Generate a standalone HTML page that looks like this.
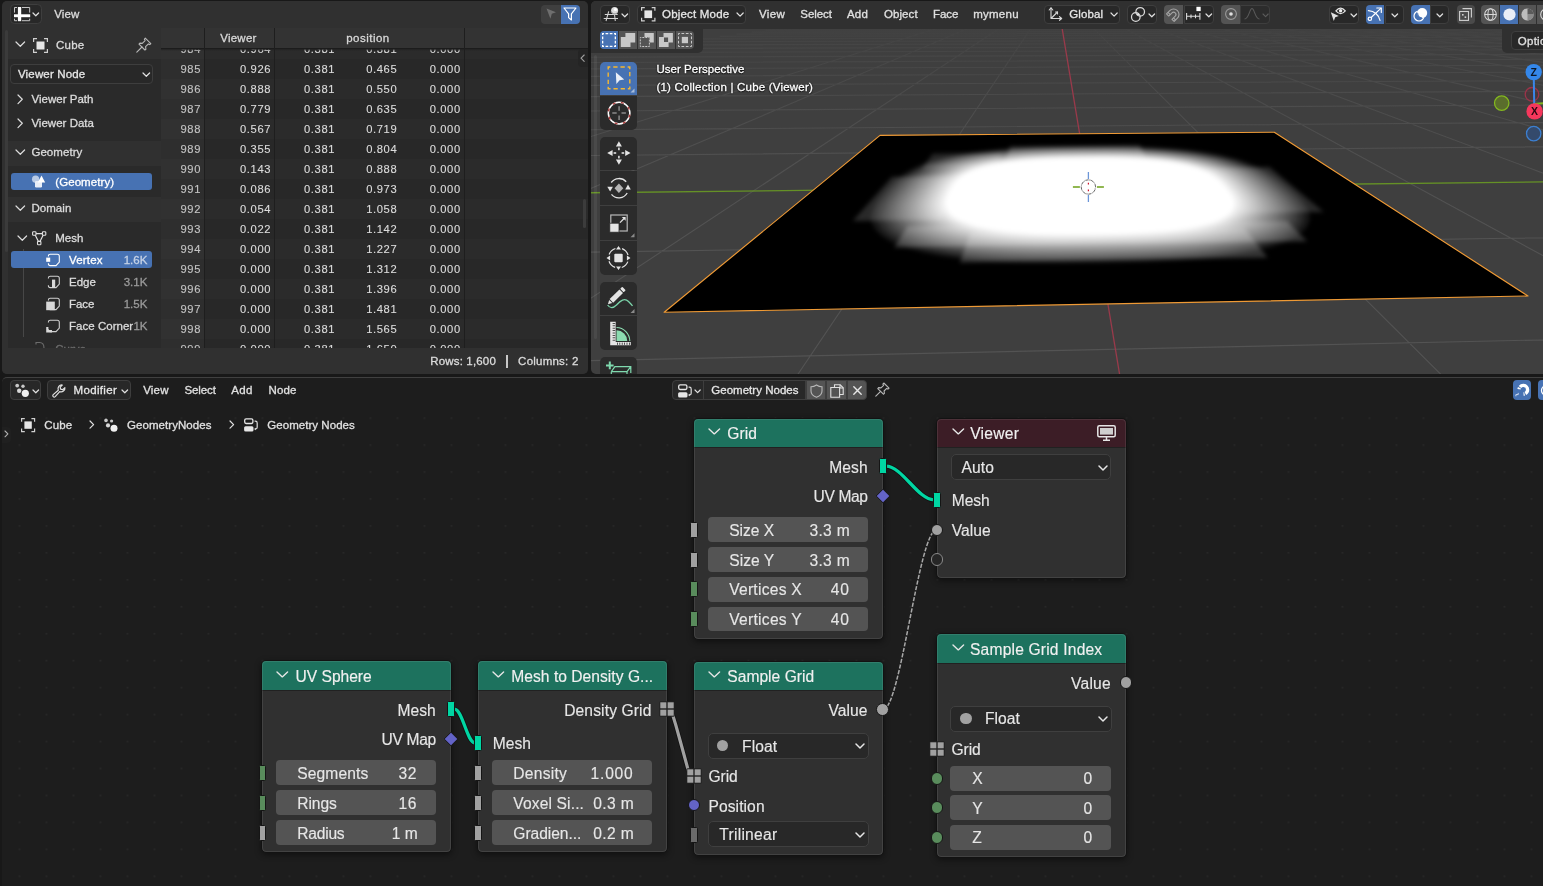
<!DOCTYPE html>
<html><head><meta charset="utf-8"><title>Blender</title>
<style>
html,body{margin:0;padding:0}
body{width:1543px;height:886px;overflow:hidden;position:relative;background:#181818;font-family:"Liberation Sans",sans-serif;font-size:11.5px;color:#e0e0e0}
div{box-sizing:content-box}
</style></head><body>
<div id="root" style="position:absolute;left:0;top:0;width:1543px;height:886px;will-change:transform">
<div style="position:absolute;left:2px;top:1px;width:586px;height:373px;background:#282828;border-radius:5px;overflow:hidden">
<div style="position:absolute;left:-2px;top:-1px;width:600px;height:400px">
<div style="position:absolute;left:2px;top:1px;width:586px;height:27px;background:#303030;border-radius:0px;"></div>
<div style="position:absolute;left:161px;top:48px;width:427px;height:300px;background:#282828;border-radius:0px;"></div>
<div style="position:absolute;left:161px;top:48px;width:427px;height:300px;overflow:hidden">
<div style="position:absolute;left:-161px;top:-48px;width:600px;height:400px">
<div style="position:absolute;left:161px;top:39px;width:427px;height:20px;background:#2b2b2b;border-radius:0px;"></div>
<div style="position:absolute;left:161px;top:79px;width:427px;height:20px;background:#2b2b2b;border-radius:0px;"></div>
<div style="position:absolute;left:161px;top:119px;width:427px;height:20px;background:#2b2b2b;border-radius:0px;"></div>
<div style="position:absolute;left:161px;top:159px;width:427px;height:20px;background:#2b2b2b;border-radius:0px;"></div>
<div style="position:absolute;left:161px;top:199px;width:427px;height:20px;background:#2b2b2b;border-radius:0px;"></div>
<div style="position:absolute;left:161px;top:239px;width:427px;height:20px;background:#2b2b2b;border-radius:0px;"></div>
<div style="position:absolute;left:161px;top:279px;width:427px;height:20px;background:#2b2b2b;border-radius:0px;"></div>
<div style="position:absolute;left:161px;top:319px;width:427px;height:20px;background:#2b2b2b;border-radius:0px;"></div>
<div style="position:absolute;left:161px;top:48px;width:43px;height:300px;background:rgba(255,255,255,0.03);border-radius:0px;"></div>
<div style="position:absolute;left:180.47px;top:40.70px;font-size:11.20px;line-height:16px;letter-spacing:0.670px;color:#c4c4c4;white-space:nowrap;-webkit-text-stroke:0.3px;-webkit-text-stroke:0.12px;">984</div>
<div style="position:absolute;left:240.01px;top:40.70px;font-size:11.20px;line-height:16px;letter-spacing:0.614px;color:#dcdcdc;white-space:nowrap;-webkit-text-stroke:0.3px;-webkit-text-stroke:0.12px;">0.964</div>
<div style="position:absolute;left:304.01px;top:40.70px;font-size:11.20px;line-height:16px;letter-spacing:0.614px;color:#dcdcdc;white-space:nowrap;-webkit-text-stroke:0.3px;-webkit-text-stroke:0.12px;">0.381</div>
<div style="position:absolute;left:366.21px;top:40.70px;font-size:11.20px;line-height:16px;letter-spacing:0.614px;color:#dcdcdc;white-space:nowrap;-webkit-text-stroke:0.3px;-webkit-text-stroke:0.12px;">0.381</div>
<div style="position:absolute;left:429.71px;top:40.70px;font-size:11.20px;line-height:16px;letter-spacing:0.614px;color:#dcdcdc;white-space:nowrap;-webkit-text-stroke:0.3px;-webkit-text-stroke:0.12px;">0.000</div>
<div style="position:absolute;left:180.47px;top:60.70px;font-size:11.20px;line-height:16px;letter-spacing:0.670px;color:#c4c4c4;white-space:nowrap;-webkit-text-stroke:0.3px;-webkit-text-stroke:0.12px;">985</div>
<div style="position:absolute;left:240.01px;top:60.70px;font-size:11.20px;line-height:16px;letter-spacing:0.614px;color:#dcdcdc;white-space:nowrap;-webkit-text-stroke:0.3px;-webkit-text-stroke:0.12px;">0.926</div>
<div style="position:absolute;left:304.01px;top:60.70px;font-size:11.20px;line-height:16px;letter-spacing:0.614px;color:#dcdcdc;white-space:nowrap;-webkit-text-stroke:0.3px;-webkit-text-stroke:0.12px;">0.381</div>
<div style="position:absolute;left:366.21px;top:60.70px;font-size:11.20px;line-height:16px;letter-spacing:0.614px;color:#dcdcdc;white-space:nowrap;-webkit-text-stroke:0.3px;-webkit-text-stroke:0.12px;">0.465</div>
<div style="position:absolute;left:429.71px;top:60.70px;font-size:11.20px;line-height:16px;letter-spacing:0.614px;color:#dcdcdc;white-space:nowrap;-webkit-text-stroke:0.3px;-webkit-text-stroke:0.12px;">0.000</div>
<div style="position:absolute;left:180.47px;top:80.70px;font-size:11.20px;line-height:16px;letter-spacing:0.670px;color:#c4c4c4;white-space:nowrap;-webkit-text-stroke:0.3px;-webkit-text-stroke:0.12px;">986</div>
<div style="position:absolute;left:240.01px;top:80.70px;font-size:11.20px;line-height:16px;letter-spacing:0.614px;color:#dcdcdc;white-space:nowrap;-webkit-text-stroke:0.3px;-webkit-text-stroke:0.12px;">0.888</div>
<div style="position:absolute;left:304.01px;top:80.70px;font-size:11.20px;line-height:16px;letter-spacing:0.614px;color:#dcdcdc;white-space:nowrap;-webkit-text-stroke:0.3px;-webkit-text-stroke:0.12px;">0.381</div>
<div style="position:absolute;left:366.21px;top:80.70px;font-size:11.20px;line-height:16px;letter-spacing:0.614px;color:#dcdcdc;white-space:nowrap;-webkit-text-stroke:0.3px;-webkit-text-stroke:0.12px;">0.550</div>
<div style="position:absolute;left:429.71px;top:80.70px;font-size:11.20px;line-height:16px;letter-spacing:0.614px;color:#dcdcdc;white-space:nowrap;-webkit-text-stroke:0.3px;-webkit-text-stroke:0.12px;">0.000</div>
<div style="position:absolute;left:180.47px;top:100.70px;font-size:11.20px;line-height:16px;letter-spacing:0.670px;color:#c4c4c4;white-space:nowrap;-webkit-text-stroke:0.3px;-webkit-text-stroke:0.12px;">987</div>
<div style="position:absolute;left:240.01px;top:100.70px;font-size:11.20px;line-height:16px;letter-spacing:0.614px;color:#dcdcdc;white-space:nowrap;-webkit-text-stroke:0.3px;-webkit-text-stroke:0.12px;">0.779</div>
<div style="position:absolute;left:304.01px;top:100.70px;font-size:11.20px;line-height:16px;letter-spacing:0.614px;color:#dcdcdc;white-space:nowrap;-webkit-text-stroke:0.3px;-webkit-text-stroke:0.12px;">0.381</div>
<div style="position:absolute;left:366.21px;top:100.70px;font-size:11.20px;line-height:16px;letter-spacing:0.614px;color:#dcdcdc;white-space:nowrap;-webkit-text-stroke:0.3px;-webkit-text-stroke:0.12px;">0.635</div>
<div style="position:absolute;left:429.71px;top:100.70px;font-size:11.20px;line-height:16px;letter-spacing:0.614px;color:#dcdcdc;white-space:nowrap;-webkit-text-stroke:0.3px;-webkit-text-stroke:0.12px;">0.000</div>
<div style="position:absolute;left:180.47px;top:120.70px;font-size:11.20px;line-height:16px;letter-spacing:0.670px;color:#c4c4c4;white-space:nowrap;-webkit-text-stroke:0.3px;-webkit-text-stroke:0.12px;">988</div>
<div style="position:absolute;left:240.01px;top:120.70px;font-size:11.20px;line-height:16px;letter-spacing:0.614px;color:#dcdcdc;white-space:nowrap;-webkit-text-stroke:0.3px;-webkit-text-stroke:0.12px;">0.567</div>
<div style="position:absolute;left:304.01px;top:120.70px;font-size:11.20px;line-height:16px;letter-spacing:0.614px;color:#dcdcdc;white-space:nowrap;-webkit-text-stroke:0.3px;-webkit-text-stroke:0.12px;">0.381</div>
<div style="position:absolute;left:366.21px;top:120.70px;font-size:11.20px;line-height:16px;letter-spacing:0.614px;color:#dcdcdc;white-space:nowrap;-webkit-text-stroke:0.3px;-webkit-text-stroke:0.12px;">0.719</div>
<div style="position:absolute;left:429.71px;top:120.70px;font-size:11.20px;line-height:16px;letter-spacing:0.614px;color:#dcdcdc;white-space:nowrap;-webkit-text-stroke:0.3px;-webkit-text-stroke:0.12px;">0.000</div>
<div style="position:absolute;left:180.47px;top:140.70px;font-size:11.20px;line-height:16px;letter-spacing:0.670px;color:#c4c4c4;white-space:nowrap;-webkit-text-stroke:0.3px;-webkit-text-stroke:0.12px;">989</div>
<div style="position:absolute;left:240.01px;top:140.70px;font-size:11.20px;line-height:16px;letter-spacing:0.614px;color:#dcdcdc;white-space:nowrap;-webkit-text-stroke:0.3px;-webkit-text-stroke:0.12px;">0.355</div>
<div style="position:absolute;left:304.01px;top:140.70px;font-size:11.20px;line-height:16px;letter-spacing:0.614px;color:#dcdcdc;white-space:nowrap;-webkit-text-stroke:0.3px;-webkit-text-stroke:0.12px;">0.381</div>
<div style="position:absolute;left:366.21px;top:140.70px;font-size:11.20px;line-height:16px;letter-spacing:0.614px;color:#dcdcdc;white-space:nowrap;-webkit-text-stroke:0.3px;-webkit-text-stroke:0.12px;">0.804</div>
<div style="position:absolute;left:429.71px;top:140.70px;font-size:11.20px;line-height:16px;letter-spacing:0.614px;color:#dcdcdc;white-space:nowrap;-webkit-text-stroke:0.3px;-webkit-text-stroke:0.12px;">0.000</div>
<div style="position:absolute;left:180.47px;top:160.70px;font-size:11.20px;line-height:16px;letter-spacing:0.670px;color:#c4c4c4;white-space:nowrap;-webkit-text-stroke:0.3px;-webkit-text-stroke:0.12px;">990</div>
<div style="position:absolute;left:240.01px;top:160.70px;font-size:11.20px;line-height:16px;letter-spacing:0.614px;color:#dcdcdc;white-space:nowrap;-webkit-text-stroke:0.3px;-webkit-text-stroke:0.12px;">0.143</div>
<div style="position:absolute;left:304.01px;top:160.70px;font-size:11.20px;line-height:16px;letter-spacing:0.614px;color:#dcdcdc;white-space:nowrap;-webkit-text-stroke:0.3px;-webkit-text-stroke:0.12px;">0.381</div>
<div style="position:absolute;left:366.21px;top:160.70px;font-size:11.20px;line-height:16px;letter-spacing:0.614px;color:#dcdcdc;white-space:nowrap;-webkit-text-stroke:0.3px;-webkit-text-stroke:0.12px;">0.888</div>
<div style="position:absolute;left:429.71px;top:160.70px;font-size:11.20px;line-height:16px;letter-spacing:0.614px;color:#dcdcdc;white-space:nowrap;-webkit-text-stroke:0.3px;-webkit-text-stroke:0.12px;">0.000</div>
<div style="position:absolute;left:180.47px;top:180.70px;font-size:11.20px;line-height:16px;letter-spacing:0.670px;color:#c4c4c4;white-space:nowrap;-webkit-text-stroke:0.3px;-webkit-text-stroke:0.12px;">991</div>
<div style="position:absolute;left:240.01px;top:180.70px;font-size:11.20px;line-height:16px;letter-spacing:0.614px;color:#dcdcdc;white-space:nowrap;-webkit-text-stroke:0.3px;-webkit-text-stroke:0.12px;">0.086</div>
<div style="position:absolute;left:304.01px;top:180.70px;font-size:11.20px;line-height:16px;letter-spacing:0.614px;color:#dcdcdc;white-space:nowrap;-webkit-text-stroke:0.3px;-webkit-text-stroke:0.12px;">0.381</div>
<div style="position:absolute;left:366.21px;top:180.70px;font-size:11.20px;line-height:16px;letter-spacing:0.614px;color:#dcdcdc;white-space:nowrap;-webkit-text-stroke:0.3px;-webkit-text-stroke:0.12px;">0.973</div>
<div style="position:absolute;left:429.71px;top:180.70px;font-size:11.20px;line-height:16px;letter-spacing:0.614px;color:#dcdcdc;white-space:nowrap;-webkit-text-stroke:0.3px;-webkit-text-stroke:0.12px;">0.000</div>
<div style="position:absolute;left:180.47px;top:200.70px;font-size:11.20px;line-height:16px;letter-spacing:0.670px;color:#c4c4c4;white-space:nowrap;-webkit-text-stroke:0.3px;-webkit-text-stroke:0.12px;">992</div>
<div style="position:absolute;left:240.01px;top:200.70px;font-size:11.20px;line-height:16px;letter-spacing:0.614px;color:#dcdcdc;white-space:nowrap;-webkit-text-stroke:0.3px;-webkit-text-stroke:0.12px;">0.054</div>
<div style="position:absolute;left:304.01px;top:200.70px;font-size:11.20px;line-height:16px;letter-spacing:0.614px;color:#dcdcdc;white-space:nowrap;-webkit-text-stroke:0.3px;-webkit-text-stroke:0.12px;">0.381</div>
<div style="position:absolute;left:366.21px;top:200.70px;font-size:11.20px;line-height:16px;letter-spacing:0.614px;color:#dcdcdc;white-space:nowrap;-webkit-text-stroke:0.3px;-webkit-text-stroke:0.12px;">1.058</div>
<div style="position:absolute;left:429.71px;top:200.70px;font-size:11.20px;line-height:16px;letter-spacing:0.614px;color:#dcdcdc;white-space:nowrap;-webkit-text-stroke:0.3px;-webkit-text-stroke:0.12px;">0.000</div>
<div style="position:absolute;left:180.47px;top:220.70px;font-size:11.20px;line-height:16px;letter-spacing:0.670px;color:#c4c4c4;white-space:nowrap;-webkit-text-stroke:0.3px;-webkit-text-stroke:0.12px;">993</div>
<div style="position:absolute;left:240.01px;top:220.70px;font-size:11.20px;line-height:16px;letter-spacing:0.614px;color:#dcdcdc;white-space:nowrap;-webkit-text-stroke:0.3px;-webkit-text-stroke:0.12px;">0.022</div>
<div style="position:absolute;left:304.01px;top:220.70px;font-size:11.20px;line-height:16px;letter-spacing:0.614px;color:#dcdcdc;white-space:nowrap;-webkit-text-stroke:0.3px;-webkit-text-stroke:0.12px;">0.381</div>
<div style="position:absolute;left:366.21px;top:220.70px;font-size:11.20px;line-height:16px;letter-spacing:0.614px;color:#dcdcdc;white-space:nowrap;-webkit-text-stroke:0.3px;-webkit-text-stroke:0.12px;">1.142</div>
<div style="position:absolute;left:429.71px;top:220.70px;font-size:11.20px;line-height:16px;letter-spacing:0.614px;color:#dcdcdc;white-space:nowrap;-webkit-text-stroke:0.3px;-webkit-text-stroke:0.12px;">0.000</div>
<div style="position:absolute;left:180.47px;top:240.70px;font-size:11.20px;line-height:16px;letter-spacing:0.670px;color:#c4c4c4;white-space:nowrap;-webkit-text-stroke:0.3px;-webkit-text-stroke:0.12px;">994</div>
<div style="position:absolute;left:240.01px;top:240.70px;font-size:11.20px;line-height:16px;letter-spacing:0.614px;color:#dcdcdc;white-space:nowrap;-webkit-text-stroke:0.3px;-webkit-text-stroke:0.12px;">0.000</div>
<div style="position:absolute;left:304.01px;top:240.70px;font-size:11.20px;line-height:16px;letter-spacing:0.614px;color:#dcdcdc;white-space:nowrap;-webkit-text-stroke:0.3px;-webkit-text-stroke:0.12px;">0.381</div>
<div style="position:absolute;left:366.21px;top:240.70px;font-size:11.20px;line-height:16px;letter-spacing:0.614px;color:#dcdcdc;white-space:nowrap;-webkit-text-stroke:0.3px;-webkit-text-stroke:0.12px;">1.227</div>
<div style="position:absolute;left:429.71px;top:240.70px;font-size:11.20px;line-height:16px;letter-spacing:0.614px;color:#dcdcdc;white-space:nowrap;-webkit-text-stroke:0.3px;-webkit-text-stroke:0.12px;">0.000</div>
<div style="position:absolute;left:180.47px;top:260.70px;font-size:11.20px;line-height:16px;letter-spacing:0.670px;color:#c4c4c4;white-space:nowrap;-webkit-text-stroke:0.3px;-webkit-text-stroke:0.12px;">995</div>
<div style="position:absolute;left:240.01px;top:260.70px;font-size:11.20px;line-height:16px;letter-spacing:0.614px;color:#dcdcdc;white-space:nowrap;-webkit-text-stroke:0.3px;-webkit-text-stroke:0.12px;">0.000</div>
<div style="position:absolute;left:304.01px;top:260.70px;font-size:11.20px;line-height:16px;letter-spacing:0.614px;color:#dcdcdc;white-space:nowrap;-webkit-text-stroke:0.3px;-webkit-text-stroke:0.12px;">0.381</div>
<div style="position:absolute;left:366.21px;top:260.70px;font-size:11.20px;line-height:16px;letter-spacing:0.614px;color:#dcdcdc;white-space:nowrap;-webkit-text-stroke:0.3px;-webkit-text-stroke:0.12px;">1.312</div>
<div style="position:absolute;left:429.71px;top:260.70px;font-size:11.20px;line-height:16px;letter-spacing:0.614px;color:#dcdcdc;white-space:nowrap;-webkit-text-stroke:0.3px;-webkit-text-stroke:0.12px;">0.000</div>
<div style="position:absolute;left:180.47px;top:280.70px;font-size:11.20px;line-height:16px;letter-spacing:0.670px;color:#c4c4c4;white-space:nowrap;-webkit-text-stroke:0.3px;-webkit-text-stroke:0.12px;">996</div>
<div style="position:absolute;left:240.01px;top:280.70px;font-size:11.20px;line-height:16px;letter-spacing:0.614px;color:#dcdcdc;white-space:nowrap;-webkit-text-stroke:0.3px;-webkit-text-stroke:0.12px;">0.000</div>
<div style="position:absolute;left:304.01px;top:280.70px;font-size:11.20px;line-height:16px;letter-spacing:0.614px;color:#dcdcdc;white-space:nowrap;-webkit-text-stroke:0.3px;-webkit-text-stroke:0.12px;">0.381</div>
<div style="position:absolute;left:366.21px;top:280.70px;font-size:11.20px;line-height:16px;letter-spacing:0.614px;color:#dcdcdc;white-space:nowrap;-webkit-text-stroke:0.3px;-webkit-text-stroke:0.12px;">1.396</div>
<div style="position:absolute;left:429.71px;top:280.70px;font-size:11.20px;line-height:16px;letter-spacing:0.614px;color:#dcdcdc;white-space:nowrap;-webkit-text-stroke:0.3px;-webkit-text-stroke:0.12px;">0.000</div>
<div style="position:absolute;left:180.47px;top:300.70px;font-size:11.20px;line-height:16px;letter-spacing:0.670px;color:#c4c4c4;white-space:nowrap;-webkit-text-stroke:0.3px;-webkit-text-stroke:0.12px;">997</div>
<div style="position:absolute;left:240.01px;top:300.70px;font-size:11.20px;line-height:16px;letter-spacing:0.614px;color:#dcdcdc;white-space:nowrap;-webkit-text-stroke:0.3px;-webkit-text-stroke:0.12px;">0.000</div>
<div style="position:absolute;left:304.01px;top:300.70px;font-size:11.20px;line-height:16px;letter-spacing:0.614px;color:#dcdcdc;white-space:nowrap;-webkit-text-stroke:0.3px;-webkit-text-stroke:0.12px;">0.381</div>
<div style="position:absolute;left:366.21px;top:300.70px;font-size:11.20px;line-height:16px;letter-spacing:0.614px;color:#dcdcdc;white-space:nowrap;-webkit-text-stroke:0.3px;-webkit-text-stroke:0.12px;">1.481</div>
<div style="position:absolute;left:429.71px;top:300.70px;font-size:11.20px;line-height:16px;letter-spacing:0.614px;color:#dcdcdc;white-space:nowrap;-webkit-text-stroke:0.3px;-webkit-text-stroke:0.12px;">0.000</div>
<div style="position:absolute;left:180.47px;top:320.70px;font-size:11.20px;line-height:16px;letter-spacing:0.670px;color:#c4c4c4;white-space:nowrap;-webkit-text-stroke:0.3px;-webkit-text-stroke:0.12px;">998</div>
<div style="position:absolute;left:240.01px;top:320.70px;font-size:11.20px;line-height:16px;letter-spacing:0.614px;color:#dcdcdc;white-space:nowrap;-webkit-text-stroke:0.3px;-webkit-text-stroke:0.12px;">0.000</div>
<div style="position:absolute;left:304.01px;top:320.70px;font-size:11.20px;line-height:16px;letter-spacing:0.614px;color:#dcdcdc;white-space:nowrap;-webkit-text-stroke:0.3px;-webkit-text-stroke:0.12px;">0.381</div>
<div style="position:absolute;left:366.21px;top:320.70px;font-size:11.20px;line-height:16px;letter-spacing:0.614px;color:#dcdcdc;white-space:nowrap;-webkit-text-stroke:0.3px;-webkit-text-stroke:0.12px;">1.565</div>
<div style="position:absolute;left:429.71px;top:320.70px;font-size:11.20px;line-height:16px;letter-spacing:0.614px;color:#dcdcdc;white-space:nowrap;-webkit-text-stroke:0.3px;-webkit-text-stroke:0.12px;">0.000</div>
<div style="position:absolute;left:180.47px;top:340.70px;font-size:11.20px;line-height:16px;letter-spacing:0.670px;color:#c4c4c4;white-space:nowrap;-webkit-text-stroke:0.3px;-webkit-text-stroke:0.12px;">999</div>
<div style="position:absolute;left:240.01px;top:340.70px;font-size:11.20px;line-height:16px;letter-spacing:0.614px;color:#dcdcdc;white-space:nowrap;-webkit-text-stroke:0.3px;-webkit-text-stroke:0.12px;">0.000</div>
<div style="position:absolute;left:304.01px;top:340.70px;font-size:11.20px;line-height:16px;letter-spacing:0.614px;color:#dcdcdc;white-space:nowrap;-webkit-text-stroke:0.3px;-webkit-text-stroke:0.12px;">0.381</div>
<div style="position:absolute;left:366.21px;top:340.70px;font-size:11.20px;line-height:16px;letter-spacing:0.614px;color:#dcdcdc;white-space:nowrap;-webkit-text-stroke:0.3px;-webkit-text-stroke:0.12px;">1.650</div>
<div style="position:absolute;left:429.71px;top:340.70px;font-size:11.20px;line-height:16px;letter-spacing:0.614px;color:#dcdcdc;white-space:nowrap;-webkit-text-stroke:0.3px;-webkit-text-stroke:0.12px;">0.000</div>
</div></div>
<div style="position:absolute;left:161px;top:28px;width:427px;height:20px;background:#333333;border-radius:0px;"></div>
<div style="position:absolute;left:161px;top:48px;width:427px;height:1px;background:#1c1c1c;border-radius:0px;"></div>
<div style="position:absolute;left:161px;top:49px;width:427px;height:2px;background:linear-gradient(#222,rgba(40,40,40,0));border-radius:0px;"></div>
<div style="position:absolute;left:220.18px;top:30.00px;font-size:11.50px;line-height:16px;letter-spacing:0.260px;color:#d8d8d8;white-space:nowrap;-webkit-text-stroke:0.3px;">Viewer</div>
<div style="position:absolute;left:346.19px;top:30.00px;font-size:11.50px;line-height:16px;letter-spacing:0.483px;color:#d8d8d8;white-space:nowrap;-webkit-text-stroke:0.3px;">position</div>
<div style="position:absolute;left:204px;top:28px;width:1px;height:320px;background:#1e1e1e;border-radius:0px;"></div>
<div style="position:absolute;left:274px;top:28px;width:1px;height:320px;background:#1e1e1e;border-radius:0px;"></div>
<div style="position:absolute;left:464px;top:28px;width:1px;height:320px;background:#1e1e1e;border-radius:0px;"></div>
<div style="position:absolute;left:583px;top:199px;width:3px;height:29px;background:#3c3c3c;border-radius:1.5px;"></div>
<div style="position:absolute;left:578px;top:49px;width:10px;height:18px;background:#242424;border-radius:4px 0 0 4px;"></div>
<svg style="position:absolute;left:581.4px;top:54.8px;overflow:visible;" width="3.2" height="6.4" viewBox="0 0 3.2 6.4"><polyline points="3.2,0 0,3.2 3.2,6.4" fill="none" stroke="#a0a0a0" stroke-width="1.1" stroke-linecap="round" stroke-linejoin="round"/></svg>
<div style="position:absolute;left:2px;top:348px;width:586px;height:26px;background:#303030;border-radius:0px;"></div>
<div style="position:absolute;left:430.20px;top:353.00px;font-size:11.50px;line-height:16px;letter-spacing:0.171px;color:#dcdcdc;white-space:nowrap;-webkit-text-stroke:0.3px;">Rows: 1,600</div>
<div style="position:absolute;left:506px;top:355px;width:1.5px;height:13px;background:#c8c8c8;border-radius:0px;"></div>
<div style="position:absolute;left:518.10px;top:353.00px;font-size:11.50px;line-height:16px;letter-spacing:0.234px;color:#dcdcdc;white-space:nowrap;-webkit-text-stroke:0.3px;">Columns: 2</div>
<div style="position:absolute;left:2px;top:28px;width:159px;height:320px;background:#303030;border-radius:0px;"></div>
<div style="position:absolute;left:5px;top:30px;width:3px;height:222px;background:#3b3b3b;border-radius:1.5px;"></div>
<div style="position:absolute;left:8px;top:59px;width:153px;height:82px;background:#2a2a2a;border-radius:0px;"></div>
<div style="position:absolute;left:8px;top:166px;width:153px;height:31px;background:#2a2a2a;border-radius:0px;"></div>
<div style="position:absolute;left:8px;top:222px;width:153px;height:126px;background:#2a2a2a;border-radius:0px;"></div>
<svg style="position:absolute;left:16.2px;top:42.35px;overflow:visible;" width="8.6" height="4.3" viewBox="0 0 8.6 4.3"><polyline points="0,0 4.3,4.3 8.6,0" fill="none" stroke="#dcdcdc" stroke-width="1.2" stroke-linecap="round" stroke-linejoin="round"/></svg>
<svg style="position:absolute;left:32.5px;top:37.5px;overflow:visible;" width="15" height="15" viewBox="0 0 15 15"><rect x="3.5" y="3.5" width="8" height="8" fill="#e6e6e6"/><path d="M0.6,4 V0.6 H4 M11,0.6 H14.4 V4 M14.4,11 V14.4 H11 M4,14.4 H0.6 V11" fill="none" stroke="#d0d0d0" stroke-width="1.2"/></svg>
<div style="position:absolute;left:56.10px;top:37.00px;font-size:11.50px;line-height:16px;letter-spacing:0.177px;color:#dcdcdc;white-space:nowrap;-webkit-text-stroke:0.3px;">Cube</div>
<svg style="position:absolute;left:135.5px;top:37px;overflow:visible;" width="16" height="16" viewBox="0 0 16 16"><g fill="none" stroke="#b8b8b8" stroke-width="1.1" stroke-linejoin="round" stroke-linecap="round"><path d="M9.3,1.2 L14.8,6.7 L13.6,7.6 L12.4,6.9 L9.6,9.7 L9.9,12.2 L8.9,13 L3,7.1 L3.9,6.1 L6.3,6.4 L9.1,3.6 L8.4,2.4 Z"/><path d="M6,10 L0.8,15.2"/></g></svg>
<div style="position:absolute;left:10px;top:64px;width:143px;height:20px;background:#282828;border-radius:4px;box-sizing:border-box;border:1px solid #3e3e3e"></div>
<div style="position:absolute;left:18.00px;top:66.30px;font-size:11.50px;line-height:16px;letter-spacing:0.161px;color:#e6e6e6;white-space:nowrap;-webkit-text-stroke:0.3px;">Viewer Node</div>
<svg style="position:absolute;left:142.7px;top:73.35px;overflow:visible;" width="6.6" height="3.3" viewBox="0 0 6.6 3.3"><polyline points="0,0 3.3,3.3 6.6,0" fill="none" stroke="#e0e0e0" stroke-width="1.2" stroke-linecap="round" stroke-linejoin="round"/></svg>
<svg style="position:absolute;left:18.15px;top:94.5px;overflow:visible;" width="4.3" height="8.6" viewBox="0 0 4.3 8.6"><polyline points="0,0 4.3,4.3 0,8.6" fill="none" stroke="#dcdcdc" stroke-width="1.2" stroke-linecap="round" stroke-linejoin="round"/></svg>
<div style="position:absolute;left:31.40px;top:91.00px;font-size:11.50px;line-height:16px;letter-spacing:0.028px;color:#dcdcdc;white-space:nowrap;-webkit-text-stroke:0.3px;">Viewer Path</div>
<svg style="position:absolute;left:18.15px;top:118.5px;overflow:visible;" width="4.3" height="8.6" viewBox="0 0 4.3 8.6"><polyline points="0,0 4.3,4.3 0,8.6" fill="none" stroke="#dcdcdc" stroke-width="1.2" stroke-linecap="round" stroke-linejoin="round"/></svg>
<div style="position:absolute;left:31.40px;top:115.00px;font-size:11.50px;line-height:16px;letter-spacing:0.016px;color:#dcdcdc;white-space:nowrap;-webkit-text-stroke:0.3px;">Viewer Data</div>
<svg style="position:absolute;left:16.2px;top:149.85px;overflow:visible;" width="8.6" height="4.3" viewBox="0 0 8.6 4.3"><polyline points="0,0 4.3,4.3 8.6,0" fill="none" stroke="#dcdcdc" stroke-width="1.2" stroke-linecap="round" stroke-linejoin="round"/></svg>
<div style="position:absolute;left:31.40px;top:144.00px;font-size:11.50px;line-height:16px;letter-spacing:0.064px;color:#dcdcdc;white-space:nowrap;-webkit-text-stroke:0.3px;">Geometry</div>
<div style="position:absolute;left:11px;top:173px;width:141px;height:17px;background:#4772b3;border-radius:3px;"></div>
<svg style="position:absolute;left:31.2px;top:174px;overflow:visible;" width="15" height="15" viewBox="0 0 15 15"><circle cx="4.6" cy="5.2" r="3.6" fill="#b9cbe6"/><rect x="4" y="7" width="7" height="6.5" rx="1.2" fill="#e8eef8"/><path d="M10.5,1.5 L14.2,8.6 H6.8 Z" fill="#ffffff"/></svg>
<div style="position:absolute;left:55.30px;top:173.60px;font-size:11.50px;line-height:16px;letter-spacing:0.065px;color:#ffffff;white-space:nowrap;-webkit-text-stroke:0.3px;">(Geometry)</div>
<svg style="position:absolute;left:16.2px;top:205.85px;overflow:visible;" width="8.6" height="4.3" viewBox="0 0 8.6 4.3"><polyline points="0,0 4.3,4.3 8.6,0" fill="none" stroke="#dcdcdc" stroke-width="1.2" stroke-linecap="round" stroke-linejoin="round"/></svg>
<div style="position:absolute;left:31.40px;top:200.00px;font-size:11.50px;line-height:16px;letter-spacing:0.062px;color:#dcdcdc;white-space:nowrap;-webkit-text-stroke:0.3px;">Domain</div>
<svg style="position:absolute;left:18.2px;top:235.85px;overflow:visible;" width="8.6" height="4.3" viewBox="0 0 8.6 4.3"><polyline points="0,0 4.3,4.3 8.6,0" fill="none" stroke="#dcdcdc" stroke-width="1.2" stroke-linecap="round" stroke-linejoin="round"/></svg>
<svg style="position:absolute;left:32px;top:231px;overflow:visible;" width="14.5" height="14.5" viewBox="0 0 14.5 14.5"><g fill="none" stroke="#e0e0e0" stroke-width="1.2"><path d="M2.4,2.6 H12 M2.4,2.6 L7.2,12 M12,2.6 L7.2,12"/></g><g fill="#2a2a2a" stroke="#e0e0e0" stroke-width="1.1"><rect x="0.6" y="0.8" width="3.4" height="3.4" rx="0.8"/><rect x="10.4" y="0.8" width="3.4" height="3.4" rx="0.8"/><rect x="5.5" y="10.4" width="3.4" height="3.4" rx="0.8"/></g></svg>
<div style="position:absolute;left:55.30px;top:230.00px;font-size:11.50px;line-height:16px;letter-spacing:-0.005px;color:#dcdcdc;white-space:nowrap;-webkit-text-stroke:0.3px;">Mesh</div>
<div style="position:absolute;left:23px;top:249px;width:1px;height:88px;background:#474747;border-radius:0px;"></div>
<div style="position:absolute;left:11px;top:251px;width:141px;height:17px;background:#4772b3;border-radius:3px;"></div>
<svg style="position:absolute;left:46px;top:253px;overflow:visible;" width="14" height="14" viewBox="0 0 14 14"><path d="M4.2,1.2 H11.3 Q13.3,1.2 13.3,3.2 V9 L10,12.6 H4.2 Q2.4,12.6 2.4,10.8 V10.2 M2.4,3.6 V3 Q2.4,1.2 4.2,1.2" fill="none" stroke="#ffffff" stroke-width="1.1"/><rect x="0.2" y="4.6" width="4" height="4.2" fill="#fff"/></svg>
<div style="position:absolute;left:69.00px;top:251.80px;font-size:11.50px;line-height:16px;letter-spacing:0.183px;color:#ffffff;white-space:nowrap;-webkit-text-stroke:0.3px;">Vertex</div>
<div style="position:absolute;left:123.70px;top:251.80px;font-size:11.50px;line-height:16px;letter-spacing:0.036px;color:#c5d2e6;white-space:nowrap;-webkit-text-stroke:0.3px;">1.6K</div>
<svg style="position:absolute;left:46px;top:275px;overflow:visible;" width="14" height="14" viewBox="0 0 14 14"><path d="M4.2,1.2 H11.3 Q13.3,1.2 13.3,3.2 V9 L10,12.6 H4.2 Q2.4,12.6 2.4,10.8 V10.2 M2.4,3.6 V3 Q2.4,1.2 4.2,1.2" fill="none" stroke="#d0d0d0" stroke-width="1.1"/><rect x="6" y="4.6" width="3.2" height="8.4" fill="#d8d8d8"/></svg>
<div style="position:absolute;left:69.00px;top:274.20px;font-size:11.50px;line-height:16px;letter-spacing:0.011px;color:#dcdcdc;white-space:nowrap;-webkit-text-stroke:0.3px;">Edge</div>
<div style="position:absolute;left:123.70px;top:274.20px;font-size:11.50px;line-height:16px;letter-spacing:0.036px;color:#9a9a9a;white-space:nowrap;-webkit-text-stroke:0.3px;">3.1K</div>
<svg style="position:absolute;left:46px;top:297px;overflow:visible;" width="14" height="14" viewBox="0 0 14 14"><path d="M4.2,1.2 H11.3 Q13.3,1.2 13.3,3.2 V9 L10,12.6 H4.2 Q2.4,12.6 2.4,10.8 V10.2 M2.4,3.6 V3 Q2.4,1.2 4.2,1.2" fill="none" stroke="#d0d0d0" stroke-width="1.1"/><rect x="0.2" y="4.6" width="8.6" height="8.6" fill="#d8d8d8"/></svg>
<div style="position:absolute;left:69.00px;top:296.20px;font-size:11.50px;line-height:16px;letter-spacing:-0.091px;color:#dcdcdc;white-space:nowrap;-webkit-text-stroke:0.3px;">Face</div>
<div style="position:absolute;left:123.70px;top:296.20px;font-size:11.50px;line-height:16px;letter-spacing:0.036px;color:#9a9a9a;white-space:nowrap;-webkit-text-stroke:0.3px;">1.5K</div>
<svg style="position:absolute;left:46px;top:319px;overflow:visible;" width="14" height="14" viewBox="0 0 14 14"><path d="M4.2,1.2 H11.3 Q13.3,1.2 13.3,3.2 V9 L10,12.6 H4.2 Q2.4,12.6 2.4,10.8 V10.2 M2.4,3.6 V3 Q2.4,1.2 4.2,1.2" fill="none" stroke="#d0d0d0" stroke-width="1.1"/><path d="M0.2,8 H2.4 V11 H6 V13.4 H0.2 Z" fill="#d8d8d8"/></svg>
<div style="position:absolute;left:69.00px;top:318.20px;font-size:11.50px;line-height:16px;letter-spacing:0.026px;color:#dcdcdc;white-space:nowrap;-webkit-text-stroke:0.3px;">Face Corner</div>
<div style="position:absolute;left:133.40px;top:318.20px;font-size:11.50px;line-height:16px;letter-spacing:-0.033px;color:#9a9a9a;white-space:nowrap;-webkit-text-stroke:0.3px;">1K</div>
<div style="position:absolute;left:55.30px;top:340.50px;font-size:11.50px;line-height:16px;letter-spacing:-0.015px;color:#6c6c6c;white-space:nowrap;-webkit-text-stroke:0.3px;">Curve</div>
<svg style="position:absolute;left:35px;top:341px;overflow:visible;" width="12" height="12" viewBox="0 0 12 12"><path d="M1,3.5 V1.5 H4.5 Q9,1.5 9,7 V10" fill="none" stroke="#6c6c6c" stroke-width="1.1"/></svg>
<div style="position:absolute;left:2px;top:348px;width:159px;height:26px;background:#303030;border-radius:0px;"></div>
<div style="position:absolute;left:10px;top:4px;width:31.5px;height:19.8px;background:#282828;border-radius:4.5px;box-sizing:border-box;border:1px solid #3e3e3e"></div>
<svg style="position:absolute;left:13.9px;top:6.8px;overflow:visible;" width="16.2" height="14.2" viewBox="0 0 16.2 14.2"><g fill="none" stroke="#c8c8c8" stroke-width="1"><path d="M0.5,5.600 V0.5 H3 M8,0.5 H15.700 V5.600 M15.700,11.700 V13.700 H8 M3,13.700 H0.5 V11.700"/></g><rect x="3.900" y="0" width="3.300" height="14.200" fill="#fff"/><rect x="0" y="7.300" width="16.200" height="2.900" fill="#fff"/></svg>
<svg style="position:absolute;left:32.5px;top:13.1px;overflow:visible;" width="5.6" height="2.8" viewBox="0 0 5.6 2.8"><polyline points="0,0 2.8,2.8 5.6,0" fill="none" stroke="#e0e0e0" stroke-width="1.2" stroke-linecap="round" stroke-linejoin="round"/></svg>
<div style="position:absolute;left:54.20px;top:6.00px;font-size:11.50px;line-height:16px;letter-spacing:0.171px;color:#dcdcdc;white-space:nowrap;-webkit-text-stroke:0.3px;">View</div>
<div style="position:absolute;left:540.5px;top:4.5px;width:20px;height:19px;background:#3f3f3f;border-radius:4px 0 0 4px;"></div>
<div style="position:absolute;left:560.5px;top:4.5px;width:19px;height:19px;background:#4772b3;border-radius:0 4px 4px 0;"></div>
<svg style="position:absolute;left:546px;top:8px;overflow:visible;" width="11" height="12" viewBox="0 0 11 12"><path d="M0.5,0.5 L10,4.3 L5.8,5.8 L4.4,10.8 Z" fill="#6e6e6e"/></svg>
<svg style="position:absolute;left:563px;top:7px;overflow:visible;" width="14" height="14" viewBox="0 0 14 14"><path d="M1,1 H13 L8.4,6.8 V13 L5.6,10.6 V6.8 Z" fill="none" stroke="#fff" stroke-width="1.2" stroke-linejoin="round"/></svg>
</div></div>
<div style="position:absolute;left:591px;top:1px;width:952px;height:373px;background:#3f3f3f;border-radius:5px 0 0 5px;overflow:hidden">
<div style="position:absolute;left:-591px;top:-1px;width:1543px;height:400px">
<svg style="position:absolute;left:0;top:0" width="1543" height="400" viewBox="0 0 1543 400"><defs><linearGradient id="fade" x1="0" y1="0" x2="0" y2="1"><stop offset="0" stop-color="#3f3f3f" stop-opacity="1"/><stop offset="0.1" stop-color="#3f3f3f" stop-opacity="0.72"/><stop offset="0.35" stop-color="#3f3f3f" stop-opacity="0.4"/><stop offset="0.7" stop-color="#3f3f3f" stop-opacity="0.15"/><stop offset="1" stop-color="#3f3f3f" stop-opacity="0"/></linearGradient><filter id="bl" x="-10%" y="-20%" width="120%" height="140%"><feGaussianBlur stdDeviation="2.2"/></filter><clipPath id="pl"><polygon points="664.2,312.3 1528,296 1274.3,132.2 880,135.4"/></clipPath></defs><path d="M-1435724.6,193243.8 L14903.2,277.3 M-5303.3,846.5 L11570.3,208.4 M-2130.8,419.8 L9530.6,166.3 M-1070.1,277.2 L8153.7,137.8 M-220.5,162.9 L6412.9,101.9 M-7.9,134.3 L5827.7,89.8 M144.0,113.9 L5357.8,80.1 M257.9,98.5 L4972.2,72.1 M346.5,86.6 L4650.0,65.5 M417.4,77.1 L4376.8,59.8 M475.5,69.3 L4142.1,55.0 M523.8,62.8 L3938.5,50.8 M564.7,57.3 L3760.1,47.1 M599.8,52.5 L3602.4,43.8 M630.2,48.5 L3462.2,40.9 M656.8,44.9 L3336.5,38.3 M680.3,41.7 L3223.4,36.0 M701.1,38.9 L3120.9,33.9 M719.8,36.4 L3027.7,31.9 M736.6,34.1 L2942.6,30.2 M751.8,32.1 L2864.5,28.6 M765.6,30.2 L2792.6,27.1 M778.2,28.5 L2726.2,25.7 M789.8,27.0 L2664.7,24.4 M800.5,25.6 L2607.5,23.3 M810.3,24.2 L2554.3,22.2 M819.4,23.0 L2504.6,21.1 M827.8,21.9 L2458.1,20.2 M835.7,20.8 L2414.5,19.3 M843.0,19.8 L2373.5,18.4 M849.9,18.9 L2334.9,17.6 M856.3,18.0 L2298.6,16.9 M862.4,17.2 L2264.2,16.2 M868.1,16.5 L2231.7,15.5 M873.4,15.7 L2200.9,14.9 M878.5,15.1 L2171.6,14.2 M883.3,14.4 L2143.8,13.7 M887.8,13.8 L2117.4,13.1 M892.1,13.2 L2092.2,12.6 M896.2,12.7 L2068.2,12.1 M900.1,12.2 L2045.3,11.6 M903.8,11.7 L2023.4,11.2 M907.4,11.2 L2002.4,10.8 M910.8,10.7 L1982.3,10.3 M914.0,10.3 L1963.1,9.9 M917.1,9.9 L1944.6,9.6 M920.0,9.5 L1926.9,9.2 M922.9,9.1 L1909.9,8.8 M925.6,8.7 L1893.5,8.5 M928.2,8.4 L1877.8,8.2 M930.7,8.0 L1862.6,7.9 M933.1,7.7 L1848.0,7.6 M935.4,7.4 L1833.8,7.3 M937.6,7.1 L1820.2,7.0 M939.8,6.8 L1807.1,6.7 M941.9,6.5 L1794.4,6.5 M943.9,6.3 L1782.1,6.2 M945.8,6.0 L1770.2,6.0 M947.7,5.8 L1758.8,5.7 M949.5,5.5 L1747.6,5.5 M951.2,5.3 L1736.8,5.3 M952.9,5.1 L1726.4,5.1 M954.5,4.8 L1716.3,4.8 M956.1,4.6 L1706.4,4.6 M957.6,4.4 L1696.9,4.4 M959.1,4.2 L1687.6,4.2 M960.6,4.0 L1678.6,4.1 M962.0,3.8 L1669.9,3.9 M963.3,3.6 L1661.3,3.7 M964.7,3.5 L1653.1,3.5 M966.0,3.3 L1645.0,3.4 M967.2,3.1 L1637.2,3.2 M968.4,3.0 L1629.5,3.1 M969.6,2.8 L1622.1,2.9 M970.7,2.7 L1614.9,2.7 M971.9,2.5 L1607.8,2.6 M973.0,2.4 L1600.9,2.5 M974.0,2.2 L1594.2,2.3 M975.1,2.1 L1587.7,2.2 M976.1,1.9 L1581.3,2.1 M977.1,1.8 L1575.0,1.9 M978.0,1.7 L1568.9,1.8 M979.0,1.5 L1563.0,1.7 M18986.0,-530.0 L984.2,-6.7 M19045.4,-545.6 L986.0,-6.7 M19108.3,-562.2 L987.8,-6.7 M19175.2,-579.7 L989.6,-6.7 M19246.3,-598.4 L991.4,-6.7 M19322.1,-618.4 L993.2,-6.7 M19403.1,-639.6 L995.0,-6.7 M19489.8,-662.4 L996.8,-6.7 M19582.9,-686.9 L998.6,-6.7 M19683.1,-713.2 L1000.4,-6.7 M19791.2,-741.6 L1002.3,-6.7 M19908.2,-772.4 L1004.1,-6.7 M20035.2,-805.8 L1005.9,-6.7 M20173.6,-842.1 L1007.7,-6.7 M20325.1,-881.9 L1009.5,-6.7 M20491.5,-925.7 L1011.3,-6.7 M20675.1,-973.9 L1013.1,-6.7 M20878.8,-1027.5 L1014.9,-6.7 M21106.1,-1087.2 L1016.7,-6.7 M21361.3,-1154.3 L1018.5,-6.7 M21650.0,-1230.1 L1020.3,-6.7 M21979.0,-1316.6 L1022.1,-6.7 M22357.6,-1416.1 L1023.9,-6.7 M22797.8,-1531.8 L1025.7,-6.7 M23316.0,-1668.0 L1027.5,-6.7 M23935.1,-1830.7 L1029.3,-6.7 M24687.5,-2028.4 L1031.1,-6.7 M25621.6,-2273.9 L1032.9,-6.7 M26812.2,-2586.8 L1034.7,-6.7 M28381.7,-2999.3 L1036.5,-6.7 M30545.5,-3568.0 L1038.3,-6.7 M33719.6,-4402.2 L1040.1,-6.7 M38827.2,-5744.6 L1041.9,-6.7 M48409.2,-8262.8 L1043.7,-6.7 M72926.2,-14706.2 L1045.5,-6.7 M270622.6,-66663.4 L1047.3,-6.7 M-83243.6,26337.2 L1049.1,-6.7 M-24884.8,10999.8 L1050.9,-6.7 M-9486.4,6952.9 L1052.7,-6.7 M-2373.8,5083.6 L1054.5,-6.7 M4386.6,3306.9 L1058.1,-6.7 M6257.1,2815.3 L1059.9,-6.7 M7642.8,2451.1 L1061.6,-6.7 M8710.6,2170.5 L1063.4,-6.7 M9558.6,1947.6 L1065.2,-6.7 M10248.3,1766.4 L1067.0,-6.7 M10820.3,1616.0 L1068.8,-6.7 M11302.3,1489.3 L1070.6,-6.7 M11714.1,1381.1 L1072.4,-6.7 M12069.9,1287.6 L1074.2,-6.6 M12380.4,1206.0 L1076.0,-6.6 M12653.8,1134.2 L1077.8,-6.6 M12896.3,1070.4 L1079.6,-6.6 M13112.9,1013.5 L1081.3,-6.6 M13307.5,962.4 L1083.1,-6.6 M13483.4,916.1 L1084.9,-6.6 M13643.0,874.2 L1086.7,-6.6 M13788.6,835.9 L1088.5,-6.6 M13921.9,800.9 L1090.3,-6.6 M14044.4,768.7 L1092.1,-6.6 M14157.4,739.0 L1093.9,-6.6 M14262.0,711.5 L1095.6,-6.6 M14359.0,686.0 L1097.4,-6.6 M14449.2,662.3 L1099.2,-6.6 M14533.4,640.2 L1101.0,-6.6 M14612.0,619.5 L1102.8,-6.6 M14685.8,600.1 L1104.6,-6.6 M14755.0,581.9 L1106.4,-6.6 M14820.1,564.8 L1108.1,-6.6 M14881.5,548.7 L1109.9,-6.6 M14939.4,533.5 L1111.7,-6.6 M14994.2,519.1 L1113.5,-6.6 M15046.0,505.5 L1115.3,-6.6 M15095.2,492.5 L1117.0,-6.6 M15141.9,480.3 L1118.8,-6.6 M15186.3,468.6 L1120.6,-6.6 M15228.6,457.5 L1122.4,-6.6 M15268.9,446.9 L1124.2,-6.6 M15307.4,436.8 L1125.9,-6.6 M15344.1,427.1 L1127.7,-6.6" stroke="#535353" stroke-width="1.1" fill="none"/><rect x="591" y="20" width="952" height="200" fill="url(#fade)"/><path d="M1723.1,4006.9 L1056.3,-6.7" stroke="#9a3a4b" stroke-width="1.3" fill="none"/><path d="M-539.2,205.7 L2438.9,171.6" stroke="#659126" stroke-width="1.3" fill="none"/><polygon points="664.2,312.3 1528,296 1274.3,132.2 880,135.4" fill="#000" stroke="#ef9a35" stroke-width="1.15" stroke-linejoin="round"/><g clip-path="url(#pl)"><g filter="url(#bl)"><path d="M1081.7,146.6 L1107.7,146.4 L1125.0,146.5 L1140.1,146.9 L1153.8,147.4 L1166.5,148.2 L1178.4,149.1 L1189.7,150.3 L1200.4,151.6 L1210.6,153.3 L1220.2,155.1 L1229.4,157.2 L1238.2,159.6 L1246.5,162.4 L1254.4,165.5 L1262.0,169.0 L1269.5,173.2 L1277.1,178.3 L1287.4,186.6 L1297.5,195.6 L1303.4,202.1 L1307.2,208.0 L1309.3,213.7 L1309.7,219.1 L1308.2,224.3 L1304.8,229.4 L1299.5,234.2 L1292.1,238.7 L1282.6,242.9 L1271.0,246.9 L1257.1,250.5 L1240.8,253.6 L1222.0,256.4 L1200.5,258.7 L1175.7,260.5 L1146.1,261.8 L1101.0,262.8 L1055.6,263.3 L1025.3,262.9 L999.4,261.9 L976.6,260.3 L956.4,258.1 L938.5,255.4 L922.8,252.3 L909.4,248.6 L898.0,244.6 L888.7,240.2 L881.5,235.4 L876.2,230.4 L872.9,225.1 L871.3,219.5 L871.6,213.7 L873.6,207.5 L877.5,200.7 L885.0,191.2 L893.0,182.5 L899.2,177.2 L905.5,172.8 L912.2,169.0 L919.4,165.6 L927.1,162.7 L935.3,160.1 L944.1,157.8 L953.4,155.7 L963.3,153.9 L973.8,152.3 L985.0,150.9 L996.8,149.7 L1009.5,148.7 L1023.2,147.9 L1038.3,147.3 L1055.7,146.9Z" fill="#fff" fill-opacity="0.093"/><path d="M1081.9,147.4 L1107.3,147.2 L1124.3,147.3 L1139.1,147.7 L1152.5,148.2 L1165.0,148.9 L1176.7,149.9 L1187.8,151.0 L1198.2,152.4 L1208.2,154.0 L1217.6,155.8 L1226.6,157.9 L1235.1,160.2 L1243.2,162.9 L1250.9,166.0 L1258.3,169.5 L1265.5,173.5 L1272.8,178.5 L1282.7,186.6 L1292.3,195.4 L1297.9,201.7 L1301.5,207.5 L1303.4,213.0 L1303.6,218.3 L1302.0,223.3 L1298.6,228.2 L1293.3,232.8 L1286.0,237.2 L1276.8,241.3 L1265.4,245.1 L1251.8,248.5 L1236.0,251.6 L1217.8,254.2 L1196.9,256.4 L1172.9,258.1 L1144.3,259.4 L1100.6,260.4 L1056.7,260.8 L1027.4,260.5 L1002.3,259.5 L980.3,258.0 L960.6,255.9 L943.3,253.3 L928.1,250.3 L914.9,246.8 L903.8,242.9 L894.8,238.6 L887.6,234.1 L882.4,229.2 L879.0,224.1 L877.3,218.7 L877.4,213.0 L879.2,207.0 L882.9,200.4 L890.0,191.2 L897.5,182.7 L903.5,177.4 L909.5,173.1 L916.0,169.4 L923.0,166.1 L930.5,163.2 L938.5,160.7 L947.0,158.4 L956.1,156.3 L965.8,154.6 L976.1,153.0 L987.0,151.6 L998.6,150.5 L1011.0,149.5 L1024.5,148.7 L1039.3,148.1 L1056.4,147.7Z" fill="#fff" fill-opacity="0.089"/><path d="M1082.0,148.2 L1106.9,148.0 L1123.6,148.2 L1138.1,148.5 L1151.3,149.0 L1163.5,149.7 L1175.0,150.6 L1185.8,151.8 L1196.0,153.1 L1205.7,154.7 L1215.0,156.5 L1223.7,158.5 L1232.0,160.8 L1239.9,163.5 L1247.4,166.5 L1254.5,169.9 L1261.5,173.9 L1268.5,178.8 L1278.0,186.7 L1287.2,195.2 L1292.4,201.4 L1295.8,207.0 L1297.5,212.4 L1297.5,217.5 L1295.9,222.4 L1292.4,227.0 L1287.2,231.5 L1280.1,235.7 L1271.0,239.7 L1259.9,243.3 L1246.7,246.6 L1231.3,249.6 L1213.6,252.1 L1193.4,254.2 L1170.1,255.9 L1142.4,257.1 L1100.2,258.0 L1057.7,258.4 L1029.4,258.1 L1005.2,257.2 L983.8,255.7 L964.8,253.7 L948.0,251.2 L933.2,248.3 L920.4,244.9 L909.6,241.2 L900.7,237.1 L893.7,232.7 L888.5,228.0 L885.0,223.1 L883.3,217.8 L883.2,212.4 L884.9,206.5 L888.2,200.1 L894.9,191.1 L902.1,182.8 L907.8,177.7 L913.6,173.5 L919.9,169.8 L926.6,166.6 L933.9,163.8 L941.6,161.3 L950.0,159.0 L958.9,157.0 L968.3,155.3 L978.3,153.7 L989.0,152.4 L1000.4,151.2 L1012.6,150.3 L1025.7,149.5 L1040.2,148.9 L1057.0,148.5Z" fill="#fff" fill-opacity="0.092"/><path d="M1082.1,149.0 L1106.6,148.8 L1122.9,149.0 L1137.1,149.3 L1150.0,149.8 L1162.0,150.5 L1173.2,151.4 L1183.8,152.5 L1193.8,153.8 L1203.3,155.4 L1212.3,157.2 L1220.8,159.2 L1228.9,161.5 L1236.6,164.0 L1243.8,167.0 L1250.7,170.3 L1257.4,174.2 L1264.2,179.0 L1273.2,186.7 L1282.0,195.1 L1287.0,201.1 L1290.1,206.5 L1291.6,211.7 L1291.5,216.6 L1289.8,221.4 L1286.4,225.9 L1281.1,230.2 L1274.1,234.3 L1265.2,238.1 L1254.4,241.6 L1241.6,244.8 L1226.6,247.6 L1209.5,250.0 L1189.9,252.0 L1167.4,253.6 L1140.6,254.8 L1099.9,255.7 L1058.8,256.1 L1031.4,255.8 L1008.0,254.9 L987.3,253.5 L968.9,251.6 L952.6,249.2 L938.3,246.4 L925.8,243.1 L915.3,239.5 L906.6,235.6 L899.6,231.4 L894.5,226.8 L891.0,222.1 L889.2,217.0 L889.0,211.7 L890.4,206.0 L893.6,199.8 L899.9,191.0 L906.7,183.0 L912.1,178.0 L917.7,173.8 L923.7,170.3 L930.2,167.1 L937.3,164.4 L944.9,161.9 L953.0,159.7 L961.6,157.7 L970.8,156.0 L980.6,154.4 L991.1,153.1 L1002.2,152.0 L1014.1,151.1 L1027.0,150.3 L1041.2,149.7 L1057.6,149.3Z" fill="#fff" fill-opacity="0.098"/><path d="M1082.3,149.8 L1106.2,149.7 L1122.2,149.8 L1136.1,150.1 L1148.8,150.6 L1160.5,151.3 L1171.4,152.2 L1181.8,153.3 L1191.6,154.6 L1200.8,156.1 L1209.6,157.8 L1217.9,159.8 L1225.8,162.1 L1233.2,164.6 L1240.3,167.5 L1246.9,170.8 L1253.4,174.6 L1259.9,179.3 L1268.5,186.8 L1276.9,194.9 L1281.5,200.7 L1284.5,206.0 L1285.8,211.0 L1285.6,215.8 L1283.8,220.4 L1280.3,224.8 L1275.2,228.9 L1268.3,232.9 L1259.6,236.5 L1249.0,239.9 L1236.5,242.9 L1222.0,245.6 L1205.4,248.0 L1186.5,249.9 L1164.7,251.4 L1138.9,252.5 L1099.5,253.4 L1059.8,253.8 L1033.4,253.5 L1010.8,252.6 L990.8,251.3 L973.0,249.4 L957.2,247.2 L943.2,244.5 L931.2,241.4 L920.9,237.9 L912.3,234.1 L905.5,230.0 L900.4,225.7 L897.0,221.1 L895.1,216.2 L894.8,211.0 L896.0,205.6 L898.9,199.5 L904.8,191.0 L911.2,183.1 L916.4,178.2 L921.8,174.2 L927.6,170.7 L933.9,167.6 L940.7,164.9 L948.1,162.5 L956.0,160.3 L964.4,158.4 L973.4,156.7 L983.0,155.2 L993.2,153.9 L1004.0,152.8 L1015.7,151.8 L1028.3,151.1 L1042.2,150.5 L1058.3,150.1Z" fill="#fff" fill-opacity="0.107"/><path d="M1082.4,150.6 L1105.8,150.5 L1121.5,150.6 L1135.1,150.9 L1147.5,151.4 L1158.9,152.1 L1169.6,153.0 L1179.8,154.1 L1189.3,155.4 L1198.3,156.8 L1206.9,158.5 L1215.0,160.5 L1222.6,162.7 L1229.8,165.2 L1236.7,168.0 L1243.1,171.2 L1249.3,174.9 L1255.6,179.5 L1263.8,186.8 L1271.7,194.7 L1276.1,200.4 L1278.8,205.5 L1280.0,210.4 L1279.7,215.0 L1277.8,219.4 L1274.4,223.7 L1269.3,227.7 L1262.5,231.4 L1254.0,235.0 L1243.7,238.2 L1231.6,241.1 L1217.5,243.7 L1201.5,245.9 L1183.1,247.8 L1162.1,249.3 L1137.1,250.3 L1099.1,251.2 L1060.8,251.5 L1035.3,251.2 L1013.5,250.4 L994.2,249.1 L977.0,247.4 L961.7,245.2 L948.2,242.6 L936.4,239.6 L926.4,236.3 L918.1,232.6 L911.4,228.7 L906.3,224.5 L902.9,220.1 L900.9,215.4 L900.5,210.4 L901.5,205.1 L904.2,199.2 L909.7,190.9 L915.8,183.3 L920.7,178.5 L925.9,174.6 L931.5,171.1 L937.6,168.1 L944.2,165.5 L951.3,163.1 L959.0,161.0 L967.2,159.1 L976.0,157.4 L985.3,155.9 L995.3,154.6 L1005.9,153.6 L1017.3,152.6 L1029.6,151.9 L1043.2,151.4 L1058.9,150.9Z" fill="#fff" fill-opacity="0.117"/><path d="M1082.5,151.5 L1105.5,151.4 L1120.8,151.5 L1134.1,151.8 L1146.2,152.3 L1157.4,152.9 L1167.8,153.8 L1177.7,154.9 L1187.0,156.1 L1195.8,157.6 L1204.2,159.2 L1212.0,161.1 L1219.5,163.3 L1226.5,165.7 L1233.0,168.5 L1239.3,171.6 L1245.3,175.3 L1251.2,179.7 L1259.1,186.9 L1266.6,194.6 L1270.7,200.1 L1273.2,205.1 L1274.3,209.7 L1273.8,214.2 L1271.9,218.5 L1268.4,222.5 L1263.4,226.4 L1256.8,230.0 L1248.5,233.4 L1238.5,236.5 L1226.7,239.3 L1213.1,241.8 L1197.5,244.0 L1179.8,245.7 L1159.5,247.1 L1135.4,248.2 L1098.7,248.9 L1061.8,249.3 L1037.2,249.0 L1016.2,248.2 L997.5,247.0 L980.9,245.3 L966.1,243.2 L953.0,240.7 L941.6,237.9 L931.8,234.7 L923.7,231.2 L917.2,227.4 L912.2,223.4 L908.7,219.1 L906.7,214.5 L906.2,209.7 L907.0,204.6 L909.5,198.9 L914.7,190.9 L920.4,183.4 L925.1,178.8 L930.0,174.9 L935.4,171.6 L941.3,168.6 L947.7,166.0 L954.6,163.7 L962.0,161.6 L970.0,159.8 L978.6,158.1 L987.7,156.7 L997.4,155.4 L1007.7,154.3 L1018.9,153.5 L1030.9,152.7 L1044.2,152.2 L1059.6,151.8Z" fill="#fff" fill-opacity="0.130"/><path d="M1082.7,152.3 L1105.1,152.2 L1120.0,152.3 L1133.0,152.6 L1144.8,153.1 L1155.8,153.8 L1166.0,154.6 L1175.6,155.7 L1184.7,156.9 L1193.3,158.3 L1201.4,159.9 L1209.1,161.8 L1216.3,163.9 L1223.0,166.3 L1229.4,169.0 L1235.4,172.1 L1241.2,175.6 L1246.9,180.0 L1254.4,186.9 L1261.5,194.4 L1265.4,199.7 L1267.7,204.6 L1268.5,209.1 L1268.0,213.4 L1266.0,217.5 L1262.6,221.4 L1257.6,225.2 L1251.1,228.6 L1243.0,231.9 L1233.3,234.9 L1221.9,237.6 L1208.7,239.9 L1193.7,242.0 L1176.6,243.7 L1156.9,245.0 L1133.7,246.0 L1098.4,246.8 L1062.8,247.1 L1039.1,246.8 L1018.8,246.1 L1000.8,244.9 L984.7,243.3 L970.4,241.3 L957.8,238.9 L946.7,236.2 L937.2,233.1 L929.3,229.8 L922.9,226.1 L918.0,222.2 L914.5,218.1 L912.4,213.7 L911.8,209.1 L912.5,204.1 L914.8,198.6 L919.6,190.8 L925.0,183.6 L929.4,179.0 L934.2,175.3 L939.3,172.0 L945.0,169.2 L951.2,166.6 L957.9,164.3 L965.1,162.3 L972.9,160.5 L981.2,158.8 L990.0,157.4 L999.5,156.2 L1009.6,155.2 L1020.5,154.3 L1032.3,153.6 L1045.3,153.0 L1060.3,152.6Z" fill="#fff" fill-opacity="0.147"/><path d="M1082.8,153.2 L1104.7,153.1 L1119.3,153.2 L1132.0,153.5 L1143.5,154.0 L1154.2,154.6 L1164.2,155.4 L1173.5,156.5 L1182.4,157.7 L1190.7,159.1 L1198.6,160.7 L1206.0,162.5 L1213.0,164.6 L1219.6,166.9 L1225.8,169.5 L1231.6,172.5 L1237.1,176.0 L1242.5,180.2 L1249.7,187.0 L1256.4,194.3 L1260.0,199.4 L1262.1,204.1 L1262.8,208.5 L1262.2,212.6 L1260.2,216.6 L1256.8,220.4 L1251.9,223.9 L1245.5,227.3 L1237.7,230.4 L1228.2,233.3 L1217.1,235.8 L1204.4,238.1 L1189.9,240.1 L1173.3,241.7 L1154.4,243.0 L1132.1,243.9 L1098.0,244.6 L1063.8,244.9 L1040.9,244.7 L1021.4,244.0 L1004.0,242.8 L988.5,241.3 L974.7,239.4 L962.5,237.1 L951.7,234.5 L942.5,231.6 L934.8,228.4 L928.5,224.9 L923.7,221.1 L920.2,217.1 L918.1,212.9 L917.4,208.5 L918.0,203.6 L920.0,198.3 L924.5,190.8 L929.6,183.7 L933.8,179.3 L938.3,175.6 L943.3,172.5 L948.7,169.7 L954.7,167.2 L961.2,164.9 L968.2,162.9 L975.7,161.2 L983.8,159.6 L992.5,158.2 L1001.7,157.0 L1011.5,156.0 L1022.1,155.1 L1033.6,154.4 L1046.3,153.9 L1060.9,153.5Z" fill="#fff" fill-opacity="0.171"/><path d="M1083.0,154.1 L1104.3,154.0 L1118.6,154.1 L1130.9,154.4 L1142.2,154.8 L1152.6,155.5 L1162.3,156.3 L1171.4,157.3 L1180.0,158.4 L1188.2,159.8 L1195.8,161.4 L1203.0,163.2 L1209.8,165.2 L1216.1,167.5 L1222.1,170.0 L1227.7,173.0 L1232.9,176.4 L1238.2,180.5 L1244.9,187.0 L1251.3,194.1 L1254.7,199.1 L1256.6,203.6 L1257.2,207.8 L1256.5,211.8 L1254.4,215.7 L1251.0,219.3 L1246.2,222.7 L1240.0,225.9 L1232.3,228.9 L1223.2,231.7 L1212.5,234.1 L1200.1,236.3 L1186.1,238.2 L1170.2,239.7 L1152.0,240.9 L1130.4,241.8 L1097.7,242.5 L1064.7,242.8 L1042.7,242.6 L1023.9,241.9 L1007.2,240.8 L992.3,239.3 L978.9,237.5 L967.1,235.3 L956.7,232.8 L947.8,230.0 L940.3,227.0 L934.1,223.6 L929.4,220.0 L925.9,216.2 L923.8,212.1 L923.0,207.8 L923.4,203.2 L925.3,198.0 L929.4,190.7 L934.2,183.9 L938.2,179.6 L942.5,176.0 L947.3,172.9 L952.5,170.2 L958.3,167.7 L964.5,165.6 L971.3,163.6 L978.6,161.9 L986.5,160.3 L994.9,159.0 L1003.8,157.8 L1013.4,156.8 L1023.8,155.9 L1035.0,155.3 L1047.3,154.7 L1061.6,154.4Z" fill="#fff" fill-opacity="0.204"/><path d="M1083.1,155.0 L1103.9,154.8 L1117.8,154.9 L1129.9,155.2 L1140.8,155.7 L1150.9,156.3 L1160.4,157.1 L1169.3,158.1 L1177.7,159.2 L1185.6,160.6 L1193.0,162.1 L1200.0,163.9 L1206.5,165.8 L1212.7,168.0 L1218.4,170.6 L1223.7,173.4 L1228.8,176.7 L1233.8,180.7 L1240.2,187.1 L1246.2,193.9 L1249.3,198.8 L1251.1,203.1 L1251.6,207.2 L1250.8,211.1 L1248.7,214.7 L1245.3,218.2 L1240.6,221.5 L1234.6,224.6 L1227.1,227.5 L1218.2,230.1 L1207.8,232.4 L1195.9,234.5 L1182.4,236.3 L1167.1,237.8 L1149.6,238.9 L1128.8,239.8 L1097.3,240.4 L1065.6,240.7 L1044.5,240.5 L1026.4,239.9 L1010.3,238.8 L995.9,237.4 L983.1,235.7 L971.7,233.6 L961.6,231.2 L953.0,228.5 L945.6,225.6 L939.7,222.4 L935.0,218.9 L931.6,215.2 L929.4,211.3 L928.5,207.2 L928.8,202.7 L930.5,197.7 L934.4,190.6 L938.8,184.0 L942.6,179.8 L946.7,176.4 L951.2,173.4 L956.3,170.7 L961.8,168.3 L967.9,166.2 L974.5,164.3 L981.6,162.6 L989.2,161.1 L997.3,159.7 L1006.0,158.6 L1015.4,157.6 L1025.4,156.8 L1036.3,156.1 L1048.4,155.6 L1062.3,155.2Z" fill="#fff" fill-opacity="0.253"/><path d="M1083.3,155.8 L1103.5,155.7 L1117.0,155.8 L1128.8,156.1 L1139.4,156.6 L1149.3,157.2 L1158.5,157.9 L1167.1,158.9 L1175.3,160.0 L1182.9,161.3 L1190.1,162.8 L1196.9,164.5 L1203.2,166.5 L1209.1,168.6 L1214.7,171.1 L1219.8,173.9 L1224.7,177.1 L1229.4,181.0 L1235.5,187.2 L1241.1,193.8 L1244.0,198.4 L1245.6,202.6 L1246.0,206.6 L1245.1,210.3 L1243.0,213.8 L1239.7,217.2 L1235.1,220.3 L1229.2,223.3 L1221.9,226.0 L1213.3,228.5 L1203.3,230.8 L1191.8,232.8 L1178.8,234.5 L1164.0,235.9 L1147.2,237.0 L1127.2,237.8 L1097.0,238.4 L1066.5,238.7 L1046.2,238.5 L1028.8,237.8 L1013.4,236.9 L999.6,235.5 L987.2,233.9 L976.2,231.9 L966.5,229.6 L958.1,227.0 L951.0,224.2 L945.1,221.1 L940.5,217.8 L937.2,214.3 L935.0,210.5 L934.0,206.6 L934.2,202.2 L935.7,197.4 L939.3,190.6 L943.4,184.2 L947.0,180.1 L950.9,176.7 L955.3,173.8 L960.1,171.2 L965.4,168.9 L971.3,166.8 L977.7,165.0 L984.5,163.3 L991.9,161.8 L999.8,160.5 L1008.3,159.4 L1017.3,158.4 L1027.1,157.6 L1037.7,157.0 L1049.4,156.5 L1063.0,156.1Z" fill="#fff" fill-opacity="0.336"/><path d="M1083.4,156.7 L1103.1,156.6 L1116.3,156.7 L1127.7,157.0 L1138.0,157.4 L1147.6,158.0 L1156.6,158.8 L1165.0,159.7 L1172.8,160.8 L1180.3,162.1 L1187.3,163.6 L1193.8,165.2 L1199.9,167.1 L1205.6,169.2 L1210.9,171.6 L1215.9,174.3 L1220.5,177.4 L1225.0,181.2 L1230.7,187.2 L1236.0,193.6 L1238.7,198.1 L1240.2,202.2 L1240.4,205.9 L1239.5,209.5 L1237.4,212.9 L1234.1,216.1 L1229.6,219.1 L1223.8,222.0 L1216.8,224.6 L1208.5,227.0 L1198.8,229.1 L1187.7,231.0 L1175.2,232.6 L1161.0,234.0 L1144.8,235.0 L1125.7,235.8 L1096.6,236.4 L1067.4,236.7 L1048.0,236.5 L1031.3,235.9 L1016.4,234.9 L1003.1,233.7 L991.2,232.1 L980.6,230.2 L971.2,228.0 L963.1,225.6 L956.2,222.9 L950.6,219.9 L946.1,216.8 L942.7,213.4 L940.6,209.8 L939.5,205.9 L939.6,201.8 L940.9,197.1 L944.2,190.5 L948.1,184.3 L951.4,180.4 L955.1,177.1 L959.3,174.3 L963.9,171.8 L969.1,169.5 L974.7,167.5 L980.8,165.7 L987.5,164.0 L994.6,162.6 L1002.3,161.3 L1010.5,160.2 L1019.3,159.3 L1028.8,158.5 L1039.1,157.9 L1050.5,157.4 L1063.7,157.0Z" fill="#fff" fill-opacity="0.502"/><path d="M1083.6,157.7 L1102.7,157.5 L1115.5,157.6 L1126.6,157.9 L1136.6,158.3 L1145.9,158.9 L1154.6,159.7 L1162.8,160.6 L1170.4,161.6 L1177.6,162.9 L1184.3,164.3 L1190.7,165.9 L1196.6,167.8 L1202.1,169.8 L1207.2,172.1 L1211.9,174.8 L1216.3,177.8 L1220.6,181.5 L1226.0,187.3 L1230.9,193.4 L1233.5,197.8 L1234.7,201.7 L1234.9,205.3 L1233.9,208.7 L1231.8,212.0 L1228.6,215.1 L1224.1,218.0 L1218.5,220.7 L1211.7,223.2 L1203.7,225.4 L1194.4,227.5 L1183.7,229.3 L1171.7,230.9 L1158.0,232.1 L1142.5,233.1 L1124.2,233.9 L1096.3,234.4 L1068.3,234.7 L1049.6,234.5 L1033.6,233.9 L1019.4,233.0 L1006.6,231.8 L995.2,230.3 L985.0,228.5 L975.9,226.4 L968.1,224.1 L961.4,221.5 L955.9,218.7 L951.5,215.7 L948.2,212.4 L946.1,209.0 L945.0,205.3 L944.9,201.3 L946.1,196.8 L949.1,190.5 L952.7,184.5 L955.9,180.7 L959.4,177.5 L963.3,174.7 L967.8,172.3 L972.7,170.1 L978.1,168.1 L984.1,166.3 L990.5,164.8 L997.4,163.4 L1004.8,162.1 L1012.8,161.1 L1021.3,160.1 L1030.5,159.4 L1040.5,158.7 L1051.6,158.3 L1064.4,157.9Z" fill="#fff" fill-opacity="1.000"/><path d="M959.8,262.4 L1267.6,257.5 L1244.4,228.3 L970.5,232.2Z" fill="#fff" fill-opacity="0.20"/><path d="M894.1,247.5 L1307.1,241.3 L1287.1,221.3 L907.3,226.6Z" fill="#fff" fill-opacity="0.20"/><path d="M852.8,221.1 L940.3,219.9 L962.5,175.9 L892.0,176.7Z" fill="#fff" fill-opacity="0.16"/><path d="M1241.5,213.0 L1323.8,211.9 L1269.4,167.0 L1203.7,167.7Z" fill="#fff" fill-opacity="0.16"/><path d="M1006.7,157.8 L1145.7,156.4 L1139.8,145.5 L1010.0,146.7Z" fill="#fff" fill-opacity="0.20"/><path d="M921.4,168.8 L996.2,168.0 L1001.3,153.1 L932.8,153.8Z" fill="#fff" fill-opacity="0.15"/></g></g><g fill="none"><path d="M1088.4,179 v-7 M1088.4,195 v7" stroke="#6c96d8" stroke-width="1.3"/><path d="M1079.9,187 h-7 M1096.9,187 h7" stroke="#6ea019" stroke-width="1.3"/><circle cx="1088.4" cy="187" r="7.2" stroke="#666" stroke-width="1"/><circle cx="1088.4" cy="187" r="7.2" stroke="#fff" stroke-width="1" stroke-dasharray="2.8,2.8" opacity="0.7"/><path d="M1088.4,184.4 v-1.6 M1088.4,189.6 v1.6" stroke="#d0102a" stroke-width="1.2"/></g></svg>
<svg style="position:absolute;left:0;top:0" width="1543" height="400" viewBox="0 0 1543 400"><circle cx="1532" cy="94.3" r="6.8" fill="#5a2a36" fill-opacity="0.35" stroke="#9b3349" stroke-width="1.3"/><line x1="1534.2" y1="104" x2="1533.7" y2="72" stroke="#3a86e8" stroke-width="2"/><line x1="1534.2" y1="104" x2="1560" y2="101.5" stroke="#7fb31d" stroke-width="2"/><circle cx="1501.7" cy="103.1" r="7.2" fill="#5a6d2c" stroke="#84b81f" stroke-width="1.3"/><circle cx="1533.7" cy="133.6" r="7.2" fill="#344a6c" stroke="#3c7fd0" stroke-width="1.3"/><circle cx="1533.7" cy="72.1" r="8.2" fill="#3487ea"/><circle cx="1534.6" cy="111.4" r="8.2" fill="#f6375c"/><text x="1533.7" y="76" font-size="10.5" font-weight="bold" text-anchor="middle" fill="#0b1626" font-family="Liberation Sans, sans-serif">Z</text><text x="1534.6" y="115.3" font-size="10.5" font-weight="bold" text-anchor="middle" fill="#2a0610" font-family="Liberation Sans, sans-serif">X</text></svg>
<div style="position:absolute;left:591px;top:1px;width:952px;height:27.5px;background:#303030;border-radius:0px;"></div>
<div style="position:absolute;left:591px;top:28px;width:112px;height:25px;background:#303030;border-radius:0 0 5px 0;"></div>
<div style="position:absolute;left:1502px;top:28px;width:41px;height:25px;background:#303030;border-radius:0 0 0 5px;"></div>
<div style="position:absolute;left:1510.5px;top:31px;width:40px;height:18.5px;background:#282828;border-radius:4px;box-sizing:border-box;border:1px solid #3e3e3e"></div>
<div style="position:absolute;left:1517.70px;top:32.50px;font-size:11.50px;line-height:16px;letter-spacing:0.300px;color:#e0e0e0;white-space:nowrap;-webkit-text-stroke:0.3px;">Options</div>
<div style="position:absolute;left:600px;top:4.5px;width:30.3px;height:19px;background:#282828;border-radius:4px;box-sizing:border-box;border:1px solid #3e3e3e"></div>
<svg style="position:absolute;left:604px;top:6px;overflow:visible;" width="17" height="16" viewBox="0 0 17 16"><g stroke="#d4d4d4" stroke-width="1.05" fill="none"><path d="M0.800,8.500 H13.700 M-0.300,12.500 H14 M4.700,5.300 L2,15 M10.500,8.500 L11.300,15"/></g><circle cx="10.600" cy="4.500" r="3.500" fill="#dcdcdc"/><circle cx="11.500" cy="3.500" r="1.600" fill="#fff"/><path d="M7.300,5.500 A3.500,3.500 0 0 0 13,7" fill="none" stroke="#9a9a9a" stroke-width="1"/></svg>
<svg style="position:absolute;left:622.2px;top:13.6px;overflow:visible;" width="5.6" height="2.8" viewBox="0 0 5.6 2.8"><polyline points="0,0 2.8,2.8 5.6,0" fill="none" stroke="#e0e0e0" stroke-width="1.2" stroke-linecap="round" stroke-linejoin="round"/></svg>
<div style="position:absolute;left:637px;top:4.5px;width:109.3px;height:19px;background:#282828;border-radius:4px;box-sizing:border-box;border:1px solid #3e3e3e"></div>
<svg style="position:absolute;left:640.7px;top:7px;overflow:visible;" width="14.5" height="14.5" viewBox="0 0 14.5 14.5"><rect x="3.4" y="3.4" width="7.7" height="7.7" fill="#e6e6e6"/><path d="M0.6,3.8 V0.6 H3.8 M10.7,0.6 H13.9 V3.8 M13.9,10.7 V13.9 H10.7 M3.8,13.9 H0.6 V10.7" fill="none" stroke="#d0d0d0" stroke-width="1.2"/></svg>
<div style="position:absolute;left:662.10px;top:6.00px;font-size:11.50px;line-height:16px;letter-spacing:0.182px;color:#e6e6e6;white-space:nowrap;-webkit-text-stroke:0.3px;">Object Mode</div>
<svg style="position:absolute;left:737.1px;top:13.45px;overflow:visible;" width="6.2" height="3.1" viewBox="0 0 6.2 3.1"><polyline points="0,0 3.1,3.1 6.2,0" fill="none" stroke="#e0e0e0" stroke-width="1.2" stroke-linecap="round" stroke-linejoin="round"/></svg>
<div style="position:absolute;left:758.90px;top:6.00px;font-size:11.50px;line-height:16px;letter-spacing:0.396px;color:#e0e0e0;white-space:nowrap;-webkit-text-stroke:0.3px;">View</div>
<div style="position:absolute;left:800.30px;top:6.00px;font-size:11.50px;line-height:16px;letter-spacing:-0.060px;color:#e0e0e0;white-space:nowrap;-webkit-text-stroke:0.3px;">Select</div>
<div style="position:absolute;left:846.90px;top:6.00px;font-size:11.50px;line-height:16px;letter-spacing:0.213px;color:#e0e0e0;white-space:nowrap;-webkit-text-stroke:0.3px;">Add</div>
<div style="position:absolute;left:883.90px;top:6.00px;font-size:11.50px;line-height:16px;letter-spacing:0.094px;color:#e0e0e0;white-space:nowrap;-webkit-text-stroke:0.3px;">Object</div>
<div style="position:absolute;left:933.10px;top:6.00px;font-size:11.50px;line-height:16px;letter-spacing:-0.116px;color:#e0e0e0;white-space:nowrap;-webkit-text-stroke:0.3px;">Face</div>
<div style="position:absolute;left:973.20px;top:6.00px;font-size:11.50px;line-height:16px;letter-spacing:0.251px;color:#e0e0e0;white-space:nowrap;-webkit-text-stroke:0.3px;">mymenu</div>
<div style="position:absolute;left:1044px;top:4.5px;width:76.4px;height:19px;background:#282828;border-radius:4px;box-sizing:border-box;border:1px solid #3e3e3e"></div>
<svg style="position:absolute;left:1047.5px;top:7px;overflow:visible;" width="15" height="14" viewBox="0 0 15 14"><g fill="none" stroke="#d8d8d8" stroke-width="1.1" stroke-linejoin="round" stroke-linecap="round"><path d="M3,1 V11.5 H13.5 M3,11.5 L9.5,5"/><path d="M1.2,3 L3,0.8 L4.8,3 M11.5,9.7 L13.7,11.5 L11.5,13.3 M7.5,5 H9.5 V7"/></g></svg>
<div style="position:absolute;left:1069.20px;top:6.00px;font-size:11.50px;line-height:16px;letter-spacing:0.143px;color:#e6e6e6;white-space:nowrap;-webkit-text-stroke:0.3px;">Global</div>
<svg style="position:absolute;left:1111.3px;top:13.45px;overflow:visible;" width="6.2" height="3.1" viewBox="0 0 6.2 3.1"><polyline points="0,0 3.1,3.1 6.2,0" fill="none" stroke="#e0e0e0" stroke-width="1.2" stroke-linecap="round" stroke-linejoin="round"/></svg>
<div style="position:absolute;left:1127px;top:4.5px;width:30.3px;height:19px;background:#282828;border-radius:4px;box-sizing:border-box;border:1px solid #3e3e3e"></div>
<svg style="position:absolute;left:1130px;top:6px;overflow:visible;" width="18" height="17" viewBox="0 0 18 17"><g fill="none" stroke="#d8d8d8" stroke-width="1.25"><circle cx="5.8" cy="11" r="4.3"/><circle cx="10.200" cy="5.8" r="4.3"/></g><circle cx="8" cy="8.4" r="1.15" fill="#e6e6e6"/></svg>
<svg style="position:absolute;left:1148.9px;top:13.6px;overflow:visible;" width="5.6" height="2.8" viewBox="0 0 5.6 2.8"><polyline points="0,0 2.8,2.8 5.6,0" fill="none" stroke="#e0e0e0" stroke-width="1.2" stroke-linecap="round" stroke-linejoin="round"/></svg>
<div style="position:absolute;left:1163.5px;top:4.5px;width:19.5px;height:19px;background:#545454;border-radius:4px 0 0 4px;box-sizing:border-box;"></div>
<svg style="position:absolute;left:1163.5px;top:4.5px;overflow:visible;" width="19.5" height="19" viewBox="0 0 19.5 19"><g transform="translate(9.6,9.400) rotate(45)" fill="none" stroke="#a6a6a6" stroke-width="1.1" stroke-linejoin="round"><path d="M-5.400,4.600 V0 A5.400,5.400 0 0 1 5.400,0 V4.600 H2.300 V0 A2.300,2.300 0 0 0 -2.300,0 V4.600 Z"/><path d="M-5.400,2.500 H-2.300 M2.300,2.500 H5.400"/></g></svg>
<div style="position:absolute;left:1183.5px;top:4.5px;width:30.3px;height:19px;background:#282828;border-radius:0 4px 4px 0;box-sizing:border-box;border:1px solid #3e3e3e"></div>
<svg style="position:absolute;left:1185.5px;top:5px;overflow:visible;" width="16" height="16" viewBox="0 0 16 16"><g stroke="#dcdcdc" stroke-width="1.1" fill="none"><path d="M0.5,11.3 H14 M0.600,8 V14.800 M5,9.500 V13.200 M9.500,9.500 V13.200 M13.900,8 V14.800"/></g><rect x="10.400" y="1.800" width="4.300" height="4.300" fill="#fff"/></svg>
<svg style="position:absolute;left:1205.7px;top:13.6px;overflow:visible;" width="5.6" height="2.8" viewBox="0 0 5.6 2.8"><polyline points="0,0 2.8,2.8 5.6,0" fill="none" stroke="#e0e0e0" stroke-width="1.2" stroke-linecap="round" stroke-linejoin="round"/></svg>
<div style="position:absolute;left:1221px;top:4.5px;width:18.5px;height:19px;background:#545454;border-radius:4px 0 0 4px;box-sizing:border-box;"></div>
<svg style="position:absolute;left:1223.5px;top:7px;overflow:visible;" width="14" height="14" viewBox="0 0 14 14"><circle cx="7" cy="7" r="5.4" fill="none" stroke="#9a9a9a" stroke-width="1.1"/><circle cx="7" cy="7" r="1.8" fill="#e0e0e0"/></svg>
<div style="position:absolute;left:1240px;top:4.5px;width:30.4px;height:19px;background:#2c2c2c;border-radius:0 4px 4px 0;box-sizing:border-box;border:1px solid #3e3e3e"></div>
<svg style="position:absolute;left:1243.5px;top:7px;overflow:visible;" width="16" height="14" viewBox="0 0 16 14"><path d="M0.5,12 C5,12 5.5,1.5 8,1.5 C10.5,1.5 11,12 15.5,12" fill="none" stroke="#5a5a5a" stroke-width="1.1"/></svg>
<svg style="position:absolute;left:1262.7px;top:13.7px;overflow:visible;" width="5.2" height="2.6" viewBox="0 0 5.2 2.6"><polyline points="0,0 2.6,2.6 5.2,0" fill="none" stroke="#5a5a5a" stroke-width="1.1" stroke-linecap="round" stroke-linejoin="round"/></svg>
<div style="position:absolute;left:1328.5px;top:4.5px;width:30.7px;height:19px;background:#282828;border-radius:4px;box-sizing:border-box;border:1px solid #3e3e3e"></div>
<svg style="position:absolute;left:1330px;top:6px;overflow:visible;" width="18" height="16" viewBox="0 0 18 16"><path d="M0.800,6.300 L8.800,10 L5.200,11.200 L3.800,15 Z" fill="#e0e0e0"/><path d="M5.900,4.900 Q10.600,-0.700 15.300,4.900 Q10.600,10.400 5.900,4.900 Z" fill="none" stroke="#e6e6e6" stroke-width="1.2"/><circle cx="10.600" cy="4.700" r="1.700" fill="#f0f0f0"/></svg>
<svg style="position:absolute;left:1350.7px;top:13.6px;overflow:visible;" width="5.6" height="2.8" viewBox="0 0 5.6 2.8"><polyline points="0,0 2.8,2.8 5.6,0" fill="none" stroke="#e0e0e0" stroke-width="1.2" stroke-linecap="round" stroke-linejoin="round"/></svg>
<div style="position:absolute;left:1365.8px;top:4.5px;width:18.5px;height:19px;background:#4772b3;border-radius:4px 0 0 4px;box-sizing:border-box;"></div>
<svg style="position:absolute;left:1366px;top:5px;overflow:visible;" width="18" height="18" viewBox="0 0 18 18"><g fill="none" stroke="#fff" stroke-width="1.2" stroke-linecap="round"><circle cx="3.900" cy="13.800" r="1.700"/><path d="M5.200,12.500 L14.800,3.400"/><path d="M10.800,3 H15.300 V7.500"/><path d="M2.400,5.600 Q11.600,6.200 14,15.400"/></g></svg>
<div style="position:absolute;left:1384.8px;top:4.5px;width:19.2px;height:19px;background:#282828;border-radius:0 4px 4px 0;box-sizing:border-box;border:1px solid #3e3e3e"></div>
<svg style="position:absolute;left:1391.7px;top:13.6px;overflow:visible;" width="5.6" height="2.8" viewBox="0 0 5.6 2.8"><polyline points="0,0 2.8,2.8 5.6,0" fill="none" stroke="#e0e0e0" stroke-width="1.2" stroke-linecap="round" stroke-linejoin="round"/></svg>
<div style="position:absolute;left:1410.6px;top:4.5px;width:19px;height:19px;background:#4772b3;border-radius:4px 0 0 4px;box-sizing:border-box;"></div>
<svg style="position:absolute;left:1412.8px;top:6.5px;overflow:visible;" width="15" height="15" viewBox="0 0 15 15"><circle cx="6" cy="9" r="5" fill="none" stroke="#fff" stroke-width="1.2"/><circle cx="9.2" cy="6" r="5" fill="#fff"/><path d="M4.6,6.2 A5,5 0 0 0 9,11" fill="none" stroke="#4772b3" stroke-width="1.2"/></svg>
<div style="position:absolute;left:1430px;top:4.5px;width:19px;height:19px;background:#282828;border-radius:0 4px 4px 0;box-sizing:border-box;border:1px solid #3e3e3e"></div>
<svg style="position:absolute;left:1436.7px;top:13.6px;overflow:visible;" width="5.6" height="2.8" viewBox="0 0 5.6 2.8"><polyline points="0,0 2.8,2.8 5.6,0" fill="none" stroke="#e0e0e0" stroke-width="1.2" stroke-linecap="round" stroke-linejoin="round"/></svg>
<div style="position:absolute;left:1456.5px;top:4.5px;width:18.2px;height:19px;background:#4a4a4a;border-radius:4px;box-sizing:border-box;"></div>
<svg style="position:absolute;left:1459px;top:7.5px;overflow:visible;" width="13" height="13" viewBox="0 0 13 13"><g fill="none" stroke="#d0d0d0" stroke-width="1.1"><path d="M3.5,0.6 H12.4 V9.5"/><rect x="0.6" y="3.5" width="8.9" height="8.9"/></g><rect x="3" y="6" width="1.6" height="1.6" fill="#d0d0d0"/><rect x="5.6" y="8.4" width="1.6" height="1.6" fill="#d0d0d0"/></svg>
<div style="position:absolute;left:1481px;top:4.5px;width:18.4px;height:19px;background:#545454;border-radius:4px 0 0 4px;box-sizing:border-box;"></div>
<svg style="position:absolute;left:1483.5px;top:7.5px;overflow:visible;" width="13" height="13" viewBox="0 0 13 13"><g fill="none" stroke="#d8d8d8" stroke-width="1.05"><circle cx="6.5" cy="6.5" r="5.8"/><ellipse cx="6.5" cy="6.5" rx="2.6" ry="5.8"/><path d="M0.7,6.5 H12.3"/></g></svg>
<div style="position:absolute;left:1499.9px;top:4.5px;width:18.1px;height:19px;background:#4772b3;border-radius:0;box-sizing:border-box;"></div>
<svg style="position:absolute;left:1502.5px;top:7.5px;overflow:visible;" width="13" height="13" viewBox="0 0 13 13"><circle cx="6.5" cy="6.5" r="6.1" fill="#e9eef7"/></svg>
<div style="position:absolute;left:1518.5px;top:4.5px;width:17.9px;height:19px;background:#545454;border-radius:0;box-sizing:border-box;"></div>
<svg style="position:absolute;left:1521px;top:7.5px;overflow:visible;" width="13" height="13" viewBox="0 0 13 13"><circle cx="6.5" cy="6.5" r="6.1" fill="#bdbdbd"/><path d="M6.5,0.4 A6.1,6.1 0 0 1 12.6,6.5 L6.5,6.5 Z" fill="#5a5a5a"/><path d="M6.5,6.5 L12.6,6.5 A6.1,6.1 0 0 1 6.5,12.6 Z" fill="#8a8a8a"/></svg>
<div style="position:absolute;left:1537px;top:4.5px;width:19px;height:19px;background:#545454;border-radius:0;box-sizing:border-box;"></div>
<svg style="position:absolute;left:1539.5px;top:7.5px;overflow:visible;" width="13" height="13" viewBox="0 0 13 13"><circle cx="6.5" cy="6.5" r="5.8" fill="none" stroke="#d8d8d8" stroke-width="1.1"/></svg>
<div style="position:absolute;left:600px;top:31px;width:18px;height:18px;background:#4772b3;border-radius:4px 0 0 4px;"></div>
<div style="position:absolute;left:619px;top:31px;width:18px;height:18px;background:#545454;border-radius:0;"></div>
<div style="position:absolute;left:638px;top:31px;width:18px;height:18px;background:#545454;border-radius:0;"></div>
<div style="position:absolute;left:657px;top:31px;width:18px;height:18px;background:#545454;border-radius:0;"></div>
<div style="position:absolute;left:676px;top:31px;width:18px;height:18px;background:#545454;border-radius:0 4px 4px 0;"></div>
<svg style="position:absolute;left:602px;top:33px;overflow:visible;" width="14" height="14" viewBox="0 0 14 14"><rect x="0.65" y="0.65" width="12.7" height="12.7" fill="none" stroke="#fff" stroke-width="1.3" stroke-dasharray="2.7,1.533" stroke-dashoffset="1.35"/></svg>
<svg style="position:absolute;left:621px;top:33px;overflow:visible;" width="14" height="14" viewBox="0 0 14 14"><path d="M4.4,0 H14.2 V9.4 H9.5 V14 H-0.2 V4 H4.4 Z" fill="#c8c8c8"/></svg>
<svg style="position:absolute;left:640px;top:33px;overflow:visible;" width="14" height="14" viewBox="0 0 14 14"><path d="M4.5,0 H13.8 V9.4 H9.9 V4 H4.5 Z" fill="#c8c8c8"/><rect x="0.3" y="4.5" width="9.1" height="9" fill="none" stroke="#c8c8c8" stroke-width="1" stroke-dasharray="2,1.033" stroke-dashoffset="1"/></svg>
<svg style="position:absolute;left:659px;top:33px;overflow:visible;" width="14" height="14" viewBox="0 0 14 14"><path d="M4.5,0 H13.9 V9.4 H9.6 V14 H0 V4 H4.5 Z M5,4.5 V8.9 H9.1 V4.5 Z" fill="#c8c8c8" fill-rule="evenodd"/></svg>
<svg style="position:absolute;left:678px;top:33px;overflow:visible;" width="14" height="14" viewBox="0 0 14 14"><rect x="0.5" y="0.5" width="13" height="13" fill="none" stroke="#c8c8c8" stroke-width="1" stroke-dasharray="2.700,1.633" stroke-dashoffset="1.35"/><rect x="3.800" y="3.900" width="6.200" height="6.300" fill="#c8c8c8"/></svg>
<div style="position:absolute;left:656.40px;top:61.40px;font-size:11.50px;line-height:16px;letter-spacing:0.028px;color:#ffffff;white-space:nowrap;-webkit-text-stroke:0.3px;text-shadow:0 0 2px #000,0 1px 1px rgba(0,0,0,.8);">User Perspective</div>
<div style="position:absolute;left:656.40px;top:79.30px;font-size:11.50px;line-height:16px;letter-spacing:0.206px;color:#ffffff;white-space:nowrap;-webkit-text-stroke:0.3px;text-shadow:0 0 2px #000,0 1px 1px rgba(0,0,0,.8);">(1) Collection | Cube (Viewer)</div>
<div style="position:absolute;left:593.5px;top:55px;width:3px;height:284px;background:rgba(255,255,255,0.06);border-radius:2px;"></div>
<div style="position:absolute;left:600px;top:62px;width:37px;height:33px;background:#4772b3;border-radius:5px 5px 0 0;"></div>
<div style="position:absolute;left:600px;top:95.7px;width:37px;height:34.3px;background:#2b2b2b;border-radius:0 0 5px 5px;"></div>
<div style="position:absolute;left:600px;top:137px;width:37px;height:33px;background:#2b2b2b;border-radius:5px 5px 0 0;"></div>
<div style="position:absolute;left:600px;top:170.7px;width:37px;height:34.3px;background:#2b2b2b;border-radius:0 0 0 0;"></div>
<div style="position:absolute;left:600px;top:205.7px;width:37px;height:34.3px;background:#2b2b2b;border-radius:0 0 0 0;"></div>
<div style="position:absolute;left:600px;top:240.7px;width:37px;height:34px;background:#2b2b2b;border-radius:0 0 5px 5px;"></div>
<div style="position:absolute;left:600px;top:282px;width:37px;height:33px;background:#2b2b2b;border-radius:5px 5px 0 0;"></div>
<div style="position:absolute;left:600px;top:315.7px;width:37px;height:34px;background:#2b2b2b;border-radius:0 0 5px 5px;"></div>
<div style="position:absolute;left:600px;top:357px;width:37px;height:34px;background:#2b2b2b;border-radius:5px 5px 5px 5px;"></div>
<svg style="position:absolute;left:600px;top:62px;overflow:visible;" width="37" height="33" viewBox="0 0 37 33"><rect x="8.2" y="5" width="21.6" height="21.8" fill="none" stroke="#f5b731" stroke-width="1.4" stroke-dasharray="4.3,2.9" stroke-dashoffset="2.15"/><path d="M15.8,10.2 L24.2,17.6 L19.6,18.2 L16.4,22 Z" fill="#e9eef7"/><path d="M37,29 L33,33 H37 Z" fill="#a9bddb" transform="translate(-2.5,-2.5)"/></svg>
<svg style="position:absolute;left:600px;top:95.7px;overflow:visible;" width="37" height="34.3" viewBox="0 0 37 34.3"><circle cx="19.1" cy="17.1" r="10.8" fill="none" stroke="#fff" stroke-width="1.5"/><circle cx="19.1" cy="17.1" r="10.8" fill="none" stroke="#ab3d3d" stroke-width="1.5" stroke-dasharray="3,5.48" transform="rotate(8 19.1 17.1)"/><path d="M19.1,10.3 V14.7 M19.1,19.5 V23.9 M12.3,17.1 H16.7 M21.5,17.1 H25.9" stroke="#8a8a8a" stroke-width="1.5"/></svg>
<svg style="position:absolute;left:600px;top:137px;overflow:visible;" width="37" height="33" viewBox="0 0 37 33"><g fill="#e4e4e4"><path d="M18.9,4.2 L21.9,9.6 H15.9 Z M18.9,27.8 L21.9,22.4 H15.9 Z M7.2,16 L12.6,13 V19 Z M30.6,16 L25.2,13 V19 Z"/><rect x="18.1" y="10.6" width="1.6" height="2.6"/><rect x="18.1" y="18.8" width="1.6" height="2.6"/><rect x="13.6" y="15.2" width="2.6" height="1.6"/><rect x="21.6" y="15.2" width="2.6" height="1.6"/></g></svg>
<svg style="position:absolute;left:600px;top:170.7px;overflow:visible;" width="37" height="34.3" viewBox="0 0 37 34.3"><g fill="none" stroke="#e4e4e4" stroke-width="1.3"><path d="M11.2,11.5 A9.6,9.6 0 0 1 26.2,10.8"/><path d="M27.2,22 A9.6,9.6 0 0 1 11.5,23.4"/></g><path d="M18.9,12.6 L23.3,17.3 L18.9,22 L14.5,17.3 Z" fill="#b4b4b4"/><path d="M7.3,15.8 H12.9 L10.1,20.6 Z" fill="#e4e4e4"/><path d="M25.2,18.4 H30.8 L28,13.6 Z" fill="#e4e4e4"/></svg>
<svg style="position:absolute;left:600px;top:205.7px;overflow:visible;" width="37" height="34.3" viewBox="0 0 37 34.3"><rect x="10.8" y="9" width="16.4" height="16" fill="none" stroke="#b8b8b8" stroke-width="1.2"/><rect x="9.8" y="17.2" width="9.2" height="9" fill="#e4e4e4" stroke="#2b2b2b" stroke-width="0.8"/><path d="M20,16.6 L24.8,11.8" stroke="#e4e4e4" stroke-width="1.3"/><path d="M21.8,11 H25.600 V14.800 Z" fill="#e4e4e4"/><path d="M37,29 L33,33 H37 Z" fill="#8a8a8a" transform="translate(-2.5,-1.8)"/></svg>
<svg style="position:absolute;left:600px;top:241px;overflow:visible;" width="37" height="34" viewBox="0 0 37 34"><circle cx="18.5" cy="17" r="10" fill="none" stroke="#e4e4e4" stroke-width="1.2" stroke-dasharray="9,6.7" stroke-dashoffset="4.5" transform="rotate(45 18.5 17)"/><rect x="14.3" y="12.8" width="8.4" height="8.4" rx="1" fill="#e4e4e4"/><path d="M18.5,5 L21,8.6 H16 Z M18.5,29 L21,25.4 H16 Z M6.5,17 L10.1,14.5 V19.5 Z M30.5,17 L26.9,14.5 V19.5 Z" fill="#e4e4e4"/></svg>
<svg style="position:absolute;left:600px;top:282px;overflow:visible;" width="37" height="33" viewBox="0 0 37 33"><g transform="translate(7.9,22.3) rotate(-44.5)" fill="#e4e4e4"><path d="M0,0 L4,-2.2 V2.2 Z"/><rect x="4.9" y="-2.5" width="13.8" height="5"/><rect x="19.6" y="-2.5" width="3" height="5" rx="0.8"/></g><path d="M7.6,23 C10,26.500 13,26.500 16.500,23 C20.500,18.500 24.500,15.500 28.500,19.500 C30.500,21.500 31.500,22.500 32.500,24" fill="none" stroke="#7bd4aa" stroke-width="1.3"/><path d="M37,29 L33,33 H37 Z" fill="#8a8a8a" transform="translate(-2.5,-2)"/></svg>
<svg style="position:absolute;left:600px;top:315.7px;overflow:visible;" width="37" height="34" viewBox="0 0 37 34"><path d="M10.2,5.7 H15.7 V26 H30.8 V29.3 H10.2 Z" fill="#e4e4e4"/><rect x="12.6" y="7" width="2.6" height="0.8" fill="#2b2b2b"/><rect x="12.6" y="9.4" width="2.6" height="0.8" fill="#2b2b2b"/><rect x="12.6" y="11.8" width="2.6" height="0.8" fill="#2b2b2b"/><rect x="12.6" y="14.2" width="2.6" height="0.8" fill="#2b2b2b"/><rect x="12.6" y="16.6" width="2.6" height="0.8" fill="#2b2b2b"/><rect x="12.6" y="19" width="2.6" height="0.8" fill="#2b2b2b"/><rect x="12.6" y="21.4" width="2.6" height="0.8" fill="#2b2b2b"/><rect x="12.6" y="23.8" width="2.6" height="0.8" fill="#2b2b2b"/><rect x="17" y="26.6" width="0.8" height="2.200" fill="#2b2b2b"/><rect x="19.4" y="26.6" width="0.8" height="2.200" fill="#2b2b2b"/><rect x="21.8" y="26.6" width="0.8" height="2.200" fill="#2b2b2b"/><rect x="24.2" y="26.6" width="0.8" height="2.200" fill="#2b2b2b"/><rect x="26.6" y="26.6" width="0.8" height="2.200" fill="#2b2b2b"/><rect x="29" y="26.6" width="0.8" height="2.200" fill="#2b2b2b"/><path d="M16.500,25 V14.200 A11,11 0 0 1 27.300,25 Z" fill="#8bdcb0"/><path d="M16.500,11.500 A13.600,13.600 0 0 1 29.800,25" fill="none" stroke="#8bdcb0" stroke-width="1.1"/></svg>
<svg style="position:absolute;left:600px;top:357px;overflow:visible;" width="37" height="34" viewBox="0 0 37 34"><path d="M9.8,4.600 V12.200 M6,8.400 H13.600" stroke="#7fd9ae" stroke-width="2"/><path d="M11.300,14.700 L14.900,9.600 H30.800 V16 M30.800,9.600 L27,14.700 M11.300,14.700 H27 V22 M11.300,14.700 V22" fill="none" stroke="#7fd9ae" stroke-width="1.2"/></svg>
</div></div>
<div style="position:absolute;left:2px;top:377px;width:1541px;height:509px;background:#1d1d1d;border-radius:5px 0 0 0;overflow:hidden;border-top:1px solid #404040;box-sizing:border-box">
<div style="position:absolute;left:-2px;top:-378px;width:1543px;height:886px">
<svg style="position:absolute;left:0;top:378px" width="1543" height="508"><defs><pattern id="dots" x="18.6" y="39.3" width="27" height="26.95" patternUnits="userSpaceOnUse"><rect x="0" y="0" width="1.6" height="1.6" fill="#292929"/></pattern></defs><rect x="3" y="30" width="1540" height="478" fill="url(#dots)"/></svg>
<svg style="position:absolute;left:0;top:0" width="1543" height="886"><path d="M886.0,466.2 C902.3,466.2 917.7,499.8 934.0,499.8" fill="none" stroke="#111" stroke-width="4.9" stroke-linecap="round"/><path d="M886.0,466.2 C902.3,466.2 917.7,499.8 934.0,499.8" fill="none" stroke="#00d6a3" stroke-width="3.3" /><path d="M454.5,709.2 C462.5,709.2 467.0,742.9 475.0,742.9" fill="none" stroke="#111" stroke-width="4.9" stroke-linecap="round"/><path d="M454.5,709.2 C462.5,709.2 467.0,742.9 475.0,742.9" fill="none" stroke="#00d6a3" stroke-width="3.3" /><path d="M671.5,711 Q676,725 680.5,742 L689,773" fill="none" stroke="#111" stroke-width="4.800"/><path d="M671.5,711 Q676,725 680.5,742 L689,773" fill="none" stroke="#a1a1a1" stroke-width="3.200"/><path d="M883.0,709.7 C900.7,709.7 918.8,530.0 936.5,530.0" fill="none" stroke="#a8a8a8" stroke-width="1.5" stroke-dasharray="4.200,1.500"/></svg>
<div style="position:absolute;left:693px;top:418px;width:191px;height:222px;background:#303030;border-radius:5px;box-shadow:0 2px 6px rgba(0,0,0,.45);border:1px solid #121212;box-sizing:border-box"></div>
<div style="position:absolute;left:694px;top:419px;width:189px;height:28px;background:#1d725e;border-radius:4px 4px 0 0;"></div>
<div style="position:absolute;left:694px;top:447px;width:189px;height:1px;background:rgba(0,0,0,.3);border-radius:0px;"></div>
<div style="position:absolute;left:694px;top:419px;width:189px;height:220px;background:transparent;border-radius:4px;box-sizing:border-box;border:1px solid rgba(255,255,255,0.09)"></div>
<svg style="position:absolute;left:709.3px;top:428.8px;overflow:visible;" width="10.6" height="4.9" viewBox="0 0 10.6 4.9"><polyline points="0,0 5.3,4.9 10.6,0" fill="none" stroke="#e6e6e6" stroke-width="1.4" stroke-linecap="round" stroke-linejoin="round"/></svg>
<div style="position:absolute;left:727.20px;top:422.75px;font-size:15.60px;line-height:22px;letter-spacing:0.107px;color:#f0f0f0;white-space:nowrap;-webkit-text-stroke:0.15px;">Grid</div>
<div style="position:absolute;left:829.30px;top:456.70px;font-size:15.60px;line-height:22px;letter-spacing:0.063px;color:#e6e6e6;white-space:nowrap;-webkit-text-stroke:0.15px;">Mesh</div>
<div style="position:absolute;left:879.4px;top:458.1px;width:7.4px;height:16px;background:#00d6a3;border-radius:1.5px;box-sizing:border-box;border:1px solid #151515"></div>
<div style="position:absolute;left:813.50px;top:486.40px;font-size:15.60px;line-height:22px;letter-spacing:-0.359px;color:#e6e6e6;white-space:nowrap;-webkit-text-stroke:0.15px;">UV Map</div>
<svg style="position:absolute;left:875.2px;top:488.2px;overflow:visible;" width="16" height="16" viewBox="0 0 16 16"><path d="M8,1.2 L14.8,8 L8,14.8 L1.2,8 Z" fill="#6363c7" stroke="#151515" stroke-width="1"/></svg>
<div style="position:absolute;left:708px;top:517.3px;width:160.4px;height:24.9px;background:#545454;border-radius:4px;"></div>
<div style="position:absolute;left:729.20px;top:519.75px;font-size:15.60px;line-height:22px;letter-spacing:0.002px;color:#e6e6e6;white-space:nowrap;-webkit-text-stroke:0.15px;">Size X</div>
<div style="position:absolute;left:809.40px;top:519.75px;font-size:15.60px;line-height:22px;letter-spacing:0.357px;color:#e6e6e6;white-space:nowrap;-webkit-text-stroke:0.15px;">3.3 m</div>
<div style="position:absolute;left:690.3px;top:521.7px;width:7.4px;height:16px;background:#a1a1a1;border-radius:1.5px;box-sizing:border-box;border:1px solid #151515"></div>
<div style="position:absolute;left:708px;top:547.1px;width:160.4px;height:24.9px;background:#545454;border-radius:4px;"></div>
<div style="position:absolute;left:729.20px;top:549.55px;font-size:15.60px;line-height:22px;letter-spacing:0.049px;color:#e6e6e6;white-space:nowrap;-webkit-text-stroke:0.15px;">Size Y</div>
<div style="position:absolute;left:809.40px;top:549.55px;font-size:15.60px;line-height:22px;letter-spacing:0.357px;color:#e6e6e6;white-space:nowrap;-webkit-text-stroke:0.15px;">3.3 m</div>
<div style="position:absolute;left:690.3px;top:551.5px;width:7.4px;height:16px;background:#a1a1a1;border-radius:1.5px;box-sizing:border-box;border:1px solid #151515"></div>
<div style="position:absolute;left:708px;top:576.9px;width:160.4px;height:25px;background:#545454;border-radius:4px;"></div>
<div style="position:absolute;left:729.20px;top:579.40px;font-size:15.60px;line-height:22px;letter-spacing:0.257px;color:#e6e6e6;white-space:nowrap;-webkit-text-stroke:0.15px;">Vertices X</div>
<div style="position:absolute;left:830.70px;top:579.40px;font-size:15.60px;line-height:22px;letter-spacing:0.873px;color:#e6e6e6;white-space:nowrap;-webkit-text-stroke:0.15px;">40</div>
<div style="position:absolute;left:690.3px;top:581.3px;width:7.4px;height:16px;background:#598c5c;border-radius:1.5px;box-sizing:border-box;border:1px solid #151515"></div>
<div style="position:absolute;left:708px;top:606.6px;width:160.4px;height:24.8px;background:#545454;border-radius:4px;"></div>
<div style="position:absolute;left:729.20px;top:609.00px;font-size:15.60px;line-height:22px;letter-spacing:0.285px;color:#e6e6e6;white-space:nowrap;-webkit-text-stroke:0.15px;">Vertices Y</div>
<div style="position:absolute;left:830.70px;top:609.00px;font-size:15.60px;line-height:22px;letter-spacing:0.873px;color:#e6e6e6;white-space:nowrap;-webkit-text-stroke:0.15px;">40</div>
<div style="position:absolute;left:690.3px;top:611px;width:7.4px;height:16px;background:#598c5c;border-radius:1.5px;box-sizing:border-box;border:1px solid #151515"></div>
<div style="position:absolute;left:936px;top:418px;width:191px;height:161px;background:#303030;border-radius:5px;box-shadow:0 2px 6px rgba(0,0,0,.45);border:1px solid #121212;box-sizing:border-box"></div>
<div style="position:absolute;left:937px;top:419px;width:189px;height:28px;background:#3c1d26;border-radius:4px 4px 0 0;"></div>
<div style="position:absolute;left:937px;top:447px;width:189px;height:1px;background:rgba(0,0,0,.3);border-radius:0px;"></div>
<div style="position:absolute;left:937px;top:419px;width:189px;height:159px;background:transparent;border-radius:4px;box-sizing:border-box;border:1px solid rgba(255,255,255,0.09)"></div>
<svg style="position:absolute;left:952.7px;top:428.8px;overflow:visible;" width="10.6" height="4.9" viewBox="0 0 10.6 4.9"><polyline points="0,0 5.3,4.9 10.6,0" fill="none" stroke="#e6e6e6" stroke-width="1.4" stroke-linecap="round" stroke-linejoin="round"/></svg>
<div style="position:absolute;left:970.20px;top:422.75px;font-size:15.60px;line-height:22px;letter-spacing:0.283px;color:#f0f0f0;white-space:nowrap;-webkit-text-stroke:0.15px;">Viewer</div>
<svg style="position:absolute;left:1096.5px;top:425px;overflow:visible;" width="19" height="16" viewBox="0 0 19 16"><rect x="0.8" y="0.8" width="17.4" height="11" rx="1.5" fill="none" stroke="#e6e6e6" stroke-width="1.5"/><rect x="3" y="3" width="13" height="6.6" fill="#cfcfcf"/><path d="M6,15.2 H13 M9.5,12 V15" stroke="#e6e6e6" stroke-width="1.5"/></svg>
<div style="position:absolute;left:951px;top:454px;width:160px;height:26px;background:#282828;border-radius:5px;box-sizing:border-box;border:1px solid #3f3f3f"></div>
<div style="position:absolute;left:961.40px;top:457.40px;font-size:15.60px;line-height:22px;letter-spacing:0.152px;color:#e6e6e6;white-space:nowrap;-webkit-text-stroke:0.15px;">Auto</div>
<svg style="position:absolute;left:1098.5px;top:466.2px;overflow:visible;" width="8" height="4" viewBox="0 0 8 4"><polyline points="0,0 4,4 8,0" fill="none" stroke="#e6e6e6" stroke-width="1.5" stroke-linecap="round" stroke-linejoin="round"/></svg>
<div style="position:absolute;left:951.70px;top:489.80px;font-size:15.60px;line-height:22px;letter-spacing:-0.037px;color:#e6e6e6;white-space:nowrap;-webkit-text-stroke:0.15px;">Mesh</div>
<div style="position:absolute;left:933.3px;top:491.8px;width:7.4px;height:16px;background:#00d6a3;border-radius:1.5px;box-sizing:border-box;border:1px solid #151515"></div>
<div style="position:absolute;left:951.70px;top:519.80px;font-size:15.60px;line-height:22px;letter-spacing:0.052px;color:#e6e6e6;white-space:nowrap;-webkit-text-stroke:0.15px;">Value</div>
<div style="position:absolute;left:930.5px;top:523.5px;width:12.6px;height:12.6px;background:#a1a1a1;border-radius:50%;box-sizing:border-box;border:1px solid #151515"></div>
<div style="position:absolute;left:930.6px;top:553.2px;width:12.4px;height:12.4px;background:#262626;border-radius:50%;box-sizing:border-box;border:1.3px solid #8a8a8a"></div>
<div style="position:absolute;left:936px;top:633px;width:191px;height:225px;background:#303030;border-radius:5px;box-shadow:0 2px 6px rgba(0,0,0,.45);border:1px solid #121212;box-sizing:border-box"></div>
<div style="position:absolute;left:937px;top:634px;width:189px;height:29px;background:#1d725e;border-radius:4px 4px 0 0;"></div>
<div style="position:absolute;left:937px;top:663px;width:189px;height:1px;background:rgba(0,0,0,.3);border-radius:0px;"></div>
<div style="position:absolute;left:937px;top:634px;width:189px;height:223px;background:transparent;border-radius:4px;box-sizing:border-box;border:1px solid rgba(255,255,255,0.09)"></div>
<svg style="position:absolute;left:952.5px;top:644.6px;overflow:visible;" width="10.6" height="4.9" viewBox="0 0 10.6 4.9"><polyline points="0,0 5.3,4.9 10.6,0" fill="none" stroke="#e6e6e6" stroke-width="1.4" stroke-linecap="round" stroke-linejoin="round"/></svg>
<div style="position:absolute;left:970.00px;top:638.55px;font-size:15.60px;line-height:22px;letter-spacing:0.188px;color:#f0f0f0;white-space:nowrap;-webkit-text-stroke:0.15px;">Sample Grid Index</div>
<div style="position:absolute;left:1071.10px;top:672.70px;font-size:15.60px;line-height:22px;letter-spacing:0.192px;color:#e6e6e6;white-space:nowrap;-webkit-text-stroke:0.15px;">Value</div>
<div style="position:absolute;left:1119.7px;top:676.4px;width:12.6px;height:12.6px;background:#a1a1a1;border-radius:50%;box-sizing:border-box;border:1px solid #151515"></div>
<div style="position:absolute;left:950px;top:706px;width:162px;height:26px;background:#282828;border-radius:5px;box-sizing:border-box;border:1px solid #3f3f3f"></div>
<div style="position:absolute;left:960.4px;top:712.85px;width:11.2px;height:11.2px;background:#a1a1a1;border-radius:50%;"></div>
<div style="position:absolute;left:985.10px;top:708.45px;font-size:15.60px;line-height:22px;letter-spacing:0.003px;color:#e6e6e6;white-space:nowrap;-webkit-text-stroke:0.15px;">Float</div>
<svg style="position:absolute;left:1099px;top:717.25px;overflow:visible;" width="8" height="4" viewBox="0 0 8 4"><polyline points="0,0 4,4 8,0" fill="none" stroke="#e6e6e6" stroke-width="1.5" stroke-linecap="round" stroke-linejoin="round"/></svg>
<div style="position:absolute;left:951.40px;top:738.70px;font-size:15.60px;line-height:22px;letter-spacing:-0.043px;color:#e6e6e6;white-space:nowrap;-webkit-text-stroke:0.15px;">Grid</div>
<svg style="position:absolute;left:929.1px;top:740.5px;overflow:visible;" width="16" height="16" viewBox="0 0 16 16"><rect x="0.3" y="0.3" width="15.4" height="15.4" rx="1.5" fill="#222"/><g fill="#a1a1a1"><rect x="1.3" y="1.3" width="6" height="6"/><rect x="8.7" y="1.3" width="6" height="6"/><rect x="1.3" y="8.7" width="6" height="6"/><rect x="8.7" y="8.7" width="6" height="6"/></g></svg>
<div style="position:absolute;left:950.4px;top:765.6px;width:161.1px;height:25.3px;background:#545454;border-radius:4px;"></div>
<div style="position:absolute;left:972.30px;top:768.25px;font-size:15.60px;line-height:22px;letter-spacing:0.150px;color:#e6e6e6;white-space:nowrap;-webkit-text-stroke:0.15px;">X</div>
<div style="position:absolute;left:1083.50px;top:768.25px;font-size:15.60px;line-height:22px;letter-spacing:0.150px;color:#e6e6e6;white-space:nowrap;-webkit-text-stroke:0.15px;">0</div>
<div style="position:absolute;left:930.7px;top:771.95px;width:12.6px;height:12.6px;background:#598c5c;border-radius:50%;box-sizing:border-box;border:1px solid #151515"></div>
<div style="position:absolute;left:950.4px;top:795px;width:161.1px;height:25.1px;background:#545454;border-radius:4px;"></div>
<div style="position:absolute;left:972.30px;top:797.55px;font-size:15.60px;line-height:22px;letter-spacing:0.150px;color:#e6e6e6;white-space:nowrap;-webkit-text-stroke:0.15px;">Y</div>
<div style="position:absolute;left:1083.50px;top:797.55px;font-size:15.60px;line-height:22px;letter-spacing:0.150px;color:#e6e6e6;white-space:nowrap;-webkit-text-stroke:0.15px;">0</div>
<div style="position:absolute;left:930.7px;top:801.25px;width:12.6px;height:12.6px;background:#598c5c;border-radius:50%;box-sizing:border-box;border:1px solid #151515"></div>
<div style="position:absolute;left:950.4px;top:824.6px;width:161.1px;height:25.3px;background:#545454;border-radius:4px;"></div>
<div style="position:absolute;left:972.30px;top:827.25px;font-size:15.60px;line-height:22px;letter-spacing:0.150px;color:#e6e6e6;white-space:nowrap;-webkit-text-stroke:0.15px;">Z</div>
<div style="position:absolute;left:1083.50px;top:827.25px;font-size:15.60px;line-height:22px;letter-spacing:0.150px;color:#e6e6e6;white-space:nowrap;-webkit-text-stroke:0.15px;">0</div>
<div style="position:absolute;left:930.7px;top:830.95px;width:12.6px;height:12.6px;background:#598c5c;border-radius:50%;box-sizing:border-box;border:1px solid #151515"></div>
<div style="position:absolute;left:693px;top:661px;width:191px;height:195px;background:#303030;border-radius:5px;box-shadow:0 2px 6px rgba(0,0,0,.45);border:1px solid #121212;box-sizing:border-box"></div>
<div style="position:absolute;left:694px;top:662px;width:189px;height:28px;background:#1d725e;border-radius:4px 4px 0 0;"></div>
<div style="position:absolute;left:694px;top:690px;width:189px;height:1px;background:rgba(0,0,0,.3);border-radius:0px;"></div>
<div style="position:absolute;left:694px;top:662px;width:189px;height:193px;background:transparent;border-radius:4px;box-sizing:border-box;border:1px solid rgba(255,255,255,0.09)"></div>
<svg style="position:absolute;left:709.1px;top:671.75px;overflow:visible;" width="10.6" height="4.9" viewBox="0 0 10.6 4.9"><polyline points="0,0 5.3,4.9 10.6,0" fill="none" stroke="#e6e6e6" stroke-width="1.4" stroke-linecap="round" stroke-linejoin="round"/></svg>
<div style="position:absolute;left:727.30px;top:665.70px;font-size:15.60px;line-height:22px;letter-spacing:0.018px;color:#f0f0f0;white-space:nowrap;-webkit-text-stroke:0.15px;">Sample Grid</div>
<div style="position:absolute;left:828.40px;top:699.70px;font-size:15.60px;line-height:22px;letter-spacing:0.072px;color:#e6e6e6;white-space:nowrap;-webkit-text-stroke:0.15px;">Value</div>
<div style="position:absolute;left:876.4px;top:703.4px;width:12.6px;height:12.6px;background:#a1a1a1;border-radius:50%;box-sizing:border-box;border:1px solid #151515"></div>
<div style="position:absolute;left:708px;top:733px;width:161px;height:26px;background:#282828;border-radius:5px;box-sizing:border-box;border:1px solid #3f3f3f"></div>
<div style="position:absolute;left:717.3px;top:739.95px;width:11.2px;height:11.2px;background:#a1a1a1;border-radius:50%;"></div>
<div style="position:absolute;left:742.10px;top:735.55px;font-size:15.60px;line-height:22px;letter-spacing:0.063px;color:#e6e6e6;white-space:nowrap;-webkit-text-stroke:0.15px;">Float</div>
<svg style="position:absolute;left:856.4px;top:744.35px;overflow:visible;" width="8" height="4" viewBox="0 0 8 4"><polyline points="0,0 4,4 8,0" fill="none" stroke="#e6e6e6" stroke-width="1.5" stroke-linecap="round" stroke-linejoin="round"/></svg>
<div style="position:absolute;left:708.40px;top:765.70px;font-size:15.60px;line-height:22px;letter-spacing:-0.043px;color:#e6e6e6;white-space:nowrap;-webkit-text-stroke:0.15px;">Grid</div>
<svg style="position:absolute;left:686.1px;top:767.5px;overflow:visible;" width="16" height="16" viewBox="0 0 16 16"><rect x="0.3" y="0.3" width="15.4" height="15.4" rx="1.5" fill="#222"/><g fill="#a1a1a1"><rect x="1.3" y="1.3" width="6" height="6"/><rect x="8.7" y="1.3" width="6" height="6"/><rect x="1.3" y="8.7" width="6" height="6"/><rect x="8.7" y="8.7" width="6" height="6"/></g></svg>
<div style="position:absolute;left:708.40px;top:795.80px;font-size:15.60px;line-height:22px;letter-spacing:0.100px;color:#e6e6e6;white-space:nowrap;-webkit-text-stroke:0.15px;">Position</div>
<div style="position:absolute;left:687.6px;top:798.7px;width:12.6px;height:12.6px;background:#6363c7;border-radius:50%;box-sizing:border-box;border:1px solid #151515"></div>
<div style="position:absolute;left:708px;top:821px;width:161px;height:26px;background:#282828;border-radius:5px;box-sizing:border-box;border:1px solid #3f3f3f"></div>
<div style="position:absolute;left:719.20px;top:824.20px;font-size:15.60px;line-height:22px;letter-spacing:0.281px;color:#e6e6e6;white-space:nowrap;-webkit-text-stroke:0.15px;">Trilinear</div>
<svg style="position:absolute;left:856.4px;top:833px;overflow:visible;" width="8" height="4" viewBox="0 0 8 4"><polyline points="0,0 4,4 8,0" fill="none" stroke="#e6e6e6" stroke-width="1.5" stroke-linecap="round" stroke-linejoin="round"/></svg>
<div style="position:absolute;left:690.3px;top:826.9px;width:7.4px;height:16px;background:#6a6a6a;border-radius:1.5px;box-sizing:border-box;border:1px solid #151515"></div>
<div style="position:absolute;left:261px;top:660px;width:191px;height:193px;background:#303030;border-radius:5px;box-shadow:0 2px 6px rgba(0,0,0,.45);border:1px solid #121212;box-sizing:border-box"></div>
<div style="position:absolute;left:262px;top:661px;width:189px;height:29px;background:#1d725e;border-radius:4px 4px 0 0;"></div>
<div style="position:absolute;left:262px;top:690px;width:189px;height:1px;background:rgba(0,0,0,.3);border-radius:0px;"></div>
<div style="position:absolute;left:262px;top:661px;width:189px;height:191px;background:transparent;border-radius:4px;box-sizing:border-box;border:1px solid rgba(255,255,255,0.09)"></div>
<svg style="position:absolute;left:277.4px;top:671.6px;overflow:visible;" width="10.6" height="4.9" viewBox="0 0 10.6 4.9"><polyline points="0,0 5.3,4.9 10.6,0" fill="none" stroke="#e6e6e6" stroke-width="1.4" stroke-linecap="round" stroke-linejoin="round"/></svg>
<div style="position:absolute;left:295.60px;top:665.55px;font-size:15.60px;line-height:22px;letter-spacing:-0.023px;color:#f0f0f0;white-space:nowrap;-webkit-text-stroke:0.15px;">UV Sphere</div>
<div style="position:absolute;left:397.40px;top:699.90px;font-size:15.60px;line-height:22px;letter-spacing:0.063px;color:#e6e6e6;white-space:nowrap;-webkit-text-stroke:0.15px;">Mesh</div>
<div style="position:absolute;left:447.4px;top:700.9px;width:7.4px;height:16px;background:#00d6a3;border-radius:1.5px;box-sizing:border-box;border:1px solid #151515"></div>
<div style="position:absolute;left:381.60px;top:729.20px;font-size:15.60px;line-height:22px;letter-spacing:-0.359px;color:#e6e6e6;white-space:nowrap;-webkit-text-stroke:0.15px;">UV Map</div>
<svg style="position:absolute;left:443.3px;top:731.1px;overflow:visible;" width="16" height="16" viewBox="0 0 16 16"><path d="M8,1.2 L14.8,8 L8,14.8 L1.2,8 Z" fill="#6363c7" stroke="#151515" stroke-width="1"/></svg>
<div style="position:absolute;left:276.1px;top:760.1px;width:160.4px;height:25.3px;background:#545454;border-radius:4px;"></div>
<div style="position:absolute;left:297.30px;top:762.75px;font-size:15.60px;line-height:22px;letter-spacing:0.107px;color:#e6e6e6;white-space:nowrap;-webkit-text-stroke:0.15px;">Segments</div>
<div style="position:absolute;left:398.40px;top:762.75px;font-size:15.60px;line-height:22px;letter-spacing:0.723px;color:#e6e6e6;white-space:nowrap;-webkit-text-stroke:0.15px;">32</div>
<div style="position:absolute;left:258.5px;top:764.9px;width:7.4px;height:16px;background:#598c5c;border-radius:1.5px;box-sizing:border-box;border:1px solid #151515"></div>
<div style="position:absolute;left:276.1px;top:790.1px;width:160.4px;height:25.3px;background:#545454;border-radius:4px;"></div>
<div style="position:absolute;left:297.30px;top:792.75px;font-size:15.60px;line-height:22px;letter-spacing:-0.097px;color:#e6e6e6;white-space:nowrap;-webkit-text-stroke:0.15px;">Rings</div>
<div style="position:absolute;left:398.40px;top:792.75px;font-size:15.60px;line-height:22px;letter-spacing:0.723px;color:#e6e6e6;white-space:nowrap;-webkit-text-stroke:0.15px;">16</div>
<div style="position:absolute;left:258.5px;top:794.8px;width:7.4px;height:16px;background:#598c5c;border-radius:1.5px;box-sizing:border-box;border:1px solid #151515"></div>
<div style="position:absolute;left:276.1px;top:820.1px;width:160.4px;height:25.3px;background:#545454;border-radius:4px;"></div>
<div style="position:absolute;left:297.30px;top:822.75px;font-size:15.60px;line-height:22px;letter-spacing:-0.243px;color:#e6e6e6;white-space:nowrap;-webkit-text-stroke:0.15px;">Radius</div>
<div style="position:absolute;left:391.70px;top:822.75px;font-size:15.60px;line-height:22px;letter-spacing:0.065px;color:#e6e6e6;white-space:nowrap;-webkit-text-stroke:0.15px;">1 m</div>
<div style="position:absolute;left:258.5px;top:824.7px;width:7.4px;height:16px;background:#a1a1a1;border-radius:1.5px;box-sizing:border-box;border:1px solid #151515"></div>
<div style="position:absolute;left:477px;top:660px;width:191px;height:193px;background:#303030;border-radius:5px;box-shadow:0 2px 6px rgba(0,0,0,.45);border:1px solid #121212;box-sizing:border-box"></div>
<div style="position:absolute;left:478px;top:661px;width:189px;height:29px;background:#1d725e;border-radius:4px 4px 0 0;"></div>
<div style="position:absolute;left:478px;top:690px;width:189px;height:1px;background:rgba(0,0,0,.3);border-radius:0px;"></div>
<div style="position:absolute;left:478px;top:661px;width:189px;height:191px;background:transparent;border-radius:4px;box-sizing:border-box;border:1px solid rgba(255,255,255,0.09)"></div>
<svg style="position:absolute;left:493.1px;top:671.6px;overflow:visible;" width="10.6" height="4.9" viewBox="0 0 10.6 4.9"><polyline points="0,0 5.3,4.9 10.6,0" fill="none" stroke="#e6e6e6" stroke-width="1.4" stroke-linecap="round" stroke-linejoin="round"/></svg>
<div style="position:absolute;left:511.30px;top:665.55px;font-size:15.60px;line-height:22px;letter-spacing:0.029px;color:#f0f0f0;white-space:nowrap;-webkit-text-stroke:0.15px;">Mesh to Density G...</div>
<div style="position:absolute;left:564.20px;top:699.90px;font-size:15.60px;line-height:22px;letter-spacing:0.123px;color:#e6e6e6;white-space:nowrap;-webkit-text-stroke:0.15px;">Density Grid</div>
<svg style="position:absolute;left:659.2px;top:700.9px;overflow:visible;" width="16" height="16" viewBox="0 0 16 16"><rect x="0.3" y="0.3" width="15.4" height="15.4" rx="1.5" fill="#222"/><g fill="#a1a1a1"><rect x="1.3" y="1.3" width="6" height="6"/><rect x="8.7" y="1.3" width="6" height="6"/><rect x="1.3" y="8.7" width="6" height="6"/><rect x="8.7" y="8.7" width="6" height="6"/></g></svg>
<div style="position:absolute;left:492.80px;top:732.90px;font-size:15.60px;line-height:22px;letter-spacing:-0.037px;color:#e6e6e6;white-space:nowrap;-webkit-text-stroke:0.15px;">Mesh</div>
<div style="position:absolute;left:474.4px;top:734.9px;width:7.4px;height:16px;background:#00d6a3;border-radius:1.5px;box-sizing:border-box;border:1px solid #151515"></div>
<div style="position:absolute;left:491.8px;top:760.1px;width:160.4px;height:25.3px;background:#545454;border-radius:4px;"></div>
<div style="position:absolute;left:513.30px;top:762.75px;font-size:15.60px;line-height:22px;letter-spacing:0.269px;color:#e6e6e6;white-space:nowrap;-webkit-text-stroke:0.15px;">Density</div>
<div style="position:absolute;left:590.50px;top:762.75px;font-size:15.60px;line-height:22px;letter-spacing:0.812px;color:#e6e6e6;white-space:nowrap;-webkit-text-stroke:0.15px;">1.000</div>
<div style="position:absolute;left:474.4px;top:764.9px;width:7.4px;height:16px;background:#a1a1a1;border-radius:1.5px;box-sizing:border-box;border:1px solid #151515"></div>
<div style="position:absolute;left:491.8px;top:790.1px;width:160.4px;height:25.3px;background:#545454;border-radius:4px;"></div>
<div style="position:absolute;left:513.30px;top:792.75px;font-size:15.60px;line-height:22px;letter-spacing:0.130px;color:#e6e6e6;white-space:nowrap;-webkit-text-stroke:0.15px;">Voxel Si...</div>
<div style="position:absolute;left:593.20px;top:792.75px;font-size:15.60px;line-height:22px;letter-spacing:0.357px;color:#e6e6e6;white-space:nowrap;-webkit-text-stroke:0.15px;">0.3 m</div>
<div style="position:absolute;left:474.4px;top:794.8px;width:7.4px;height:16px;background:#a1a1a1;border-radius:1.5px;box-sizing:border-box;border:1px solid #151515"></div>
<div style="position:absolute;left:491.8px;top:820.1px;width:160.4px;height:25.3px;background:#545454;border-radius:4px;"></div>
<div style="position:absolute;left:513.30px;top:822.75px;font-size:15.60px;line-height:22px;letter-spacing:-0.040px;color:#e6e6e6;white-space:nowrap;-webkit-text-stroke:0.15px;">Gradien...</div>
<div style="position:absolute;left:593.20px;top:822.75px;font-size:15.60px;line-height:22px;letter-spacing:0.357px;color:#e6e6e6;white-space:nowrap;-webkit-text-stroke:0.15px;">0.2 m</div>
<div style="position:absolute;left:474.4px;top:824.7px;width:7.4px;height:16px;background:#a1a1a1;border-radius:1.5px;box-sizing:border-box;border:1px solid #151515"></div>
<div style="position:absolute;left:10.1px;top:380.4px;width:31.4px;height:19.2px;background:#282828;border-radius:4px;box-sizing:border-box;border:1px solid #3e3e3e"></div>
<svg style="position:absolute;left:14.5px;top:383px;overflow:visible;" width="15" height="15" viewBox="0 0 15 15"><circle cx="2.2" cy="2.6" r="1.9" fill="#c8c8c8"/><circle cx="8" cy="3.2" r="1.7" fill="#c8c8c8"/><circle cx="4.2" cy="7.8" r="2.2" fill="#d8d8d8"/><circle cx="10.3" cy="10.3" r="3.6" fill="#f0f0f0"/></svg>
<svg style="position:absolute;left:32.5px;top:389.8px;overflow:visible;" width="5.6" height="2.8" viewBox="0 0 5.6 2.8"><polyline points="0,0 2.8,2.8 5.6,0" fill="none" stroke="#e0e0e0" stroke-width="1.2" stroke-linecap="round" stroke-linejoin="round"/></svg>
<div style="position:absolute;left:47.2px;top:380.4px;width:83.6px;height:19.2px;background:#282828;border-radius:4px;box-sizing:border-box;border:1px solid #3e3e3e"></div>
<svg style="position:absolute;left:52px;top:383.5px;overflow:visible;" width="14" height="14" viewBox="0 0 14 14"><path d="M12.9,3.6 A3.8,3.8 0 0 1 7.7,7.6 L3.2,12.6 A1.4,1.4 0 0 1 1.2,10.6 L6.3,6.2 A3.8,3.8 0 0 1 10.3,1 L8.2,3.2 L8.6,5.2 L10.7,5.7 Z" fill="none" stroke="#e0e0e0" stroke-width="1.2" stroke-linejoin="round"/></svg>
<div style="position:absolute;left:73.50px;top:382.20px;font-size:11.50px;line-height:16px;letter-spacing:0.350px;color:#e6e6e6;white-space:nowrap;-webkit-text-stroke:0.3px;">Modifier</div>
<svg style="position:absolute;left:121.6px;top:389.8px;overflow:visible;" width="5.6" height="2.8" viewBox="0 0 5.6 2.8"><polyline points="0,0 2.8,2.8 5.6,0" fill="none" stroke="#e0e0e0" stroke-width="1.2" stroke-linecap="round" stroke-linejoin="round"/></svg>
<div style="position:absolute;left:143.20px;top:382.20px;font-size:11.50px;line-height:16px;letter-spacing:0.196px;color:#e0e0e0;white-space:nowrap;-webkit-text-stroke:0.3px;">View</div>
<div style="position:absolute;left:184.40px;top:382.20px;font-size:11.50px;line-height:16px;letter-spacing:-0.077px;color:#e0e0e0;white-space:nowrap;-webkit-text-stroke:0.3px;">Select</div>
<div style="position:absolute;left:231.20px;top:382.20px;font-size:11.50px;line-height:16px;letter-spacing:0.313px;color:#e0e0e0;white-space:nowrap;-webkit-text-stroke:0.3px;">Add</div>
<div style="position:absolute;left:268.60px;top:382.20px;font-size:11.50px;line-height:16px;letter-spacing:0.102px;color:#e0e0e0;white-space:nowrap;-webkit-text-stroke:0.3px;">Node</div>
<svg style="position:absolute;left:20.9px;top:417.8px;overflow:visible;" width="14.2" height="14.2" viewBox="0 0 14.2 14.2"><rect x="3.4" y="3.4" width="7.4" height="7.4" fill="#e6e6e6"/><path d="M0.6,3.8 V0.6 H3.8 M10.4,0.6 H13.6 V3.8 M13.6,10.4 V13.6 H10.4 M3.8,13.6 H0.6 V10.4" fill="none" stroke="#d0d0d0" stroke-width="1.2"/></svg>
<div style="position:absolute;left:44.20px;top:416.90px;font-size:11.50px;line-height:16px;letter-spacing:0.152px;color:#e0e0e0;white-space:nowrap;-webkit-text-stroke:0.3px;">Cube</div>
<svg style="position:absolute;left:89.5px;top:421px;overflow:visible;" width="3.6" height="7.2" viewBox="0 0 3.6 7.2"><polyline points="0,0 3.6,3.6 0,7.2" fill="none" stroke="#e0e0e0" stroke-width="1.2" stroke-linecap="round" stroke-linejoin="round"/></svg>
<svg style="position:absolute;left:103.8px;top:417.5px;overflow:visible;" width="15" height="15" viewBox="0 0 15 15"><circle cx="2" cy="2.4" r="1.8" fill="#c8c8c8"/><circle cx="7.6" cy="3" r="1.6" fill="#c8c8c8"/><circle cx="4" cy="7.4" r="2.1" fill="#d8d8d8"/><circle cx="10" cy="10.2" r="3.5" fill="#f0f0f0"/></svg>
<div style="position:absolute;left:127.00px;top:416.90px;font-size:11.50px;line-height:16px;letter-spacing:0.059px;color:#e0e0e0;white-space:nowrap;-webkit-text-stroke:0.3px;">GeometryNodes</div>
<svg style="position:absolute;left:229.6px;top:421px;overflow:visible;" width="3.6" height="7.2" viewBox="0 0 3.6 7.2"><polyline points="0,0 3.6,3.6 0,7.2" fill="none" stroke="#e0e0e0" stroke-width="1.2" stroke-linecap="round" stroke-linejoin="round"/></svg>
<svg style="position:absolute;left:243.7px;top:417.8px;overflow:visible;" width="14.2" height="14.2" viewBox="0 0 14.2 14.2"><rect x="0.700" y="0.900" width="8.200" height="4.600" rx="1.400" fill="none" stroke="#e6e6e6" stroke-width="1.300"/><rect x="0.100" y="8.200" width="9.400" height="5.400" rx="1.500" fill="#e6e6e6"/><path d="M10.600,3.200 H11.400 Q13.200,3.200 13.200,5 V9.200 Q13.200,11 11.400,11 H10.800" fill="none" stroke="#e0e0e0" stroke-width="1.200"/><path d="M10.200,11 L11.800,9.800 V12.200 Z" fill="#e0e0e0"/></svg>
<div style="position:absolute;left:267.30px;top:416.90px;font-size:11.50px;line-height:16px;letter-spacing:0.041px;color:#e0e0e0;white-space:nowrap;-webkit-text-stroke:0.3px;">Geometry Nodes</div>
<div style="position:absolute;left:2px;top:426.5px;width:8.5px;height:16px;background:#202020;border-radius:0 4px 4px 0;"></div>
<svg style="position:absolute;left:4.55px;top:431.4px;overflow:visible;" width="2.9" height="5.8" viewBox="0 0 2.9 5.8"><polyline points="0,0 2.9,2.9 0,5.8" fill="none" stroke="#b0b0b0" stroke-width="1.1" stroke-linecap="round" stroke-linejoin="round"/></svg>
<div style="position:absolute;left:672.2px;top:380.4px;width:31.4px;height:19.2px;background:#282828;border-radius:4px 0 0 4px;box-sizing:border-box;border:1px solid #3e3e3e"></div>
<svg style="position:absolute;left:677.5px;top:383.6px;overflow:visible;" width="14.2" height="14.2" viewBox="0 0 14.2 14.2"><rect x="0.700" y="0.900" width="8.200" height="4.600" rx="1.400" fill="none" stroke="#e6e6e6" stroke-width="1.300"/><rect x="0.100" y="8.200" width="9.400" height="5.400" rx="1.500" fill="#e6e6e6"/><path d="M10.600,3.200 H11.400 Q13.200,3.200 13.200,5 V9.200 Q13.200,11 11.400,11 H10.800" fill="none" stroke="#e0e0e0" stroke-width="1.200"/><path d="M10.200,11 L11.800,9.800 V12.200 Z" fill="#e0e0e0"/></svg>
<svg style="position:absolute;left:694.7px;top:390.1px;overflow:visible;" width="5.2" height="2.6" viewBox="0 0 5.2 2.6"><polyline points="0,0 2.6,2.6 5.2,0" fill="none" stroke="#e0e0e0" stroke-width="1.2" stroke-linecap="round" stroke-linejoin="round"/></svg>
<div style="position:absolute;left:703.3px;top:380.4px;width:102.7px;height:19.2px;background:#282828;border-radius:0;box-sizing:border-box;border:1px solid #3e3e3e"></div>
<div style="position:absolute;left:711.30px;top:382.20px;font-size:11.50px;line-height:16px;letter-spacing:0.020px;color:#e6e6e6;white-space:nowrap;-webkit-text-stroke:0.3px;">Geometry Nodes</div>
<div style="position:absolute;left:805.7px;top:380.4px;width:20.8px;height:19.2px;background:#545454;border-radius:0;box-sizing:border-box;border:1px solid #3e3e3e"></div>
<svg style="position:absolute;left:809.8px;top:383.5px;overflow:visible;" width="13" height="14" viewBox="0 0 13 14"><path d="M6.5,1 C8.5,2.4 10.3,2.8 12,2.8 V7 C12,10 9.5,12.2 6.5,13.2 C3.5,12.2 1,10 1,7 V2.8 C2.700,2.8 4.500,2.4 6.500,1 Z" fill="none" stroke="#b8b8b8" stroke-width="1.1"/></svg>
<div style="position:absolute;left:826.2px;top:380.4px;width:21.2px;height:19.2px;background:#545454;border-radius:0;box-sizing:border-box;border:1px solid #3e3e3e"></div>
<svg style="position:absolute;left:829.8px;top:383.6px;overflow:visible;" width="14" height="14" viewBox="0 0 14 14"><path d="M4.5,3.5 V0.8 H10.2 L13.2,3.8 V10.5 H9.6" fill="none" stroke="#e0e0e0" stroke-width="1.1"/><path d="M0.8,3.5 H9.6 V13.2 H0.8 Z" fill="none" stroke="#e0e0e0" stroke-width="1.1"/><path d="M10,0.8 V4 H13.2" fill="none" stroke="#e0e0e0" stroke-width="1"/></svg>
<div style="position:absolute;left:847.1px;top:380.4px;width:19.8px;height:19.2px;background:#545454;border-radius:0 4px 4px 0;box-sizing:border-box;border:1px solid #3e3e3e"></div>
<svg style="position:absolute;left:852.5px;top:386px;overflow:visible;" width="9" height="9" viewBox="0 0 9 9"><path d="M0.8,0.8 L8.2,8.2 M8.2,0.8 L0.8,8.2" stroke="#e6e6e6" stroke-width="1.4" stroke-linecap="round"/></svg>
<svg style="position:absolute;left:874.8px;top:382.3px;overflow:visible;" width="15" height="15" viewBox="0 0 15 15"><g fill="none" stroke="#b8b8b8" stroke-width="1.1" stroke-linejoin="round" stroke-linecap="round"><path d="M8.8,1 L14,6.2 L12.9,7.1 L11.7,6.4 L9.1,9 L9.4,11.4 L8.4,12.2 L2.8,6.6 L3.6,5.6 L6,5.9 L8.600,3.300 L7.900,2.100 Z"/><path d="M5.6,9.4 L0.800,14.200"/></g></svg>
<div style="position:absolute;left:1512.6px;top:380.4px;width:18.9px;height:19.2px;background:#4772b3;border-radius:4px;box-sizing:border-box;"></div>
<svg style="position:absolute;left:1512.6px;top:381px;overflow:visible;" width="19" height="18.6" viewBox="0 0 19 18.6"><path d="M6.03,8.18 A4.30,4.30 0 1 1 10.53,12.99" fill="none" stroke="#fff" stroke-width="3.3" stroke-dasharray="1.5,0.9,14.71,0.9,1.5,99"/><path d="M2.9,15.3 V13.6 H5.2 V11.9" fill="none" stroke="#dfe7f5" stroke-width="0.9"/></svg>
<div style="position:absolute;left:1537.8px;top:380.4px;width:19.2px;height:19.2px;background:#4772b3;border-radius:4px;box-sizing:border-box;"></div>
<svg style="position:absolute;left:1540px;top:384px;overflow:visible;" width="12" height="13" viewBox="0 0 12 13"><circle cx="6" cy="6.5" r="4.5" fill="none" stroke="#fff" stroke-width="1.3"/></svg>
</div></div>
</div>
</body></html>
